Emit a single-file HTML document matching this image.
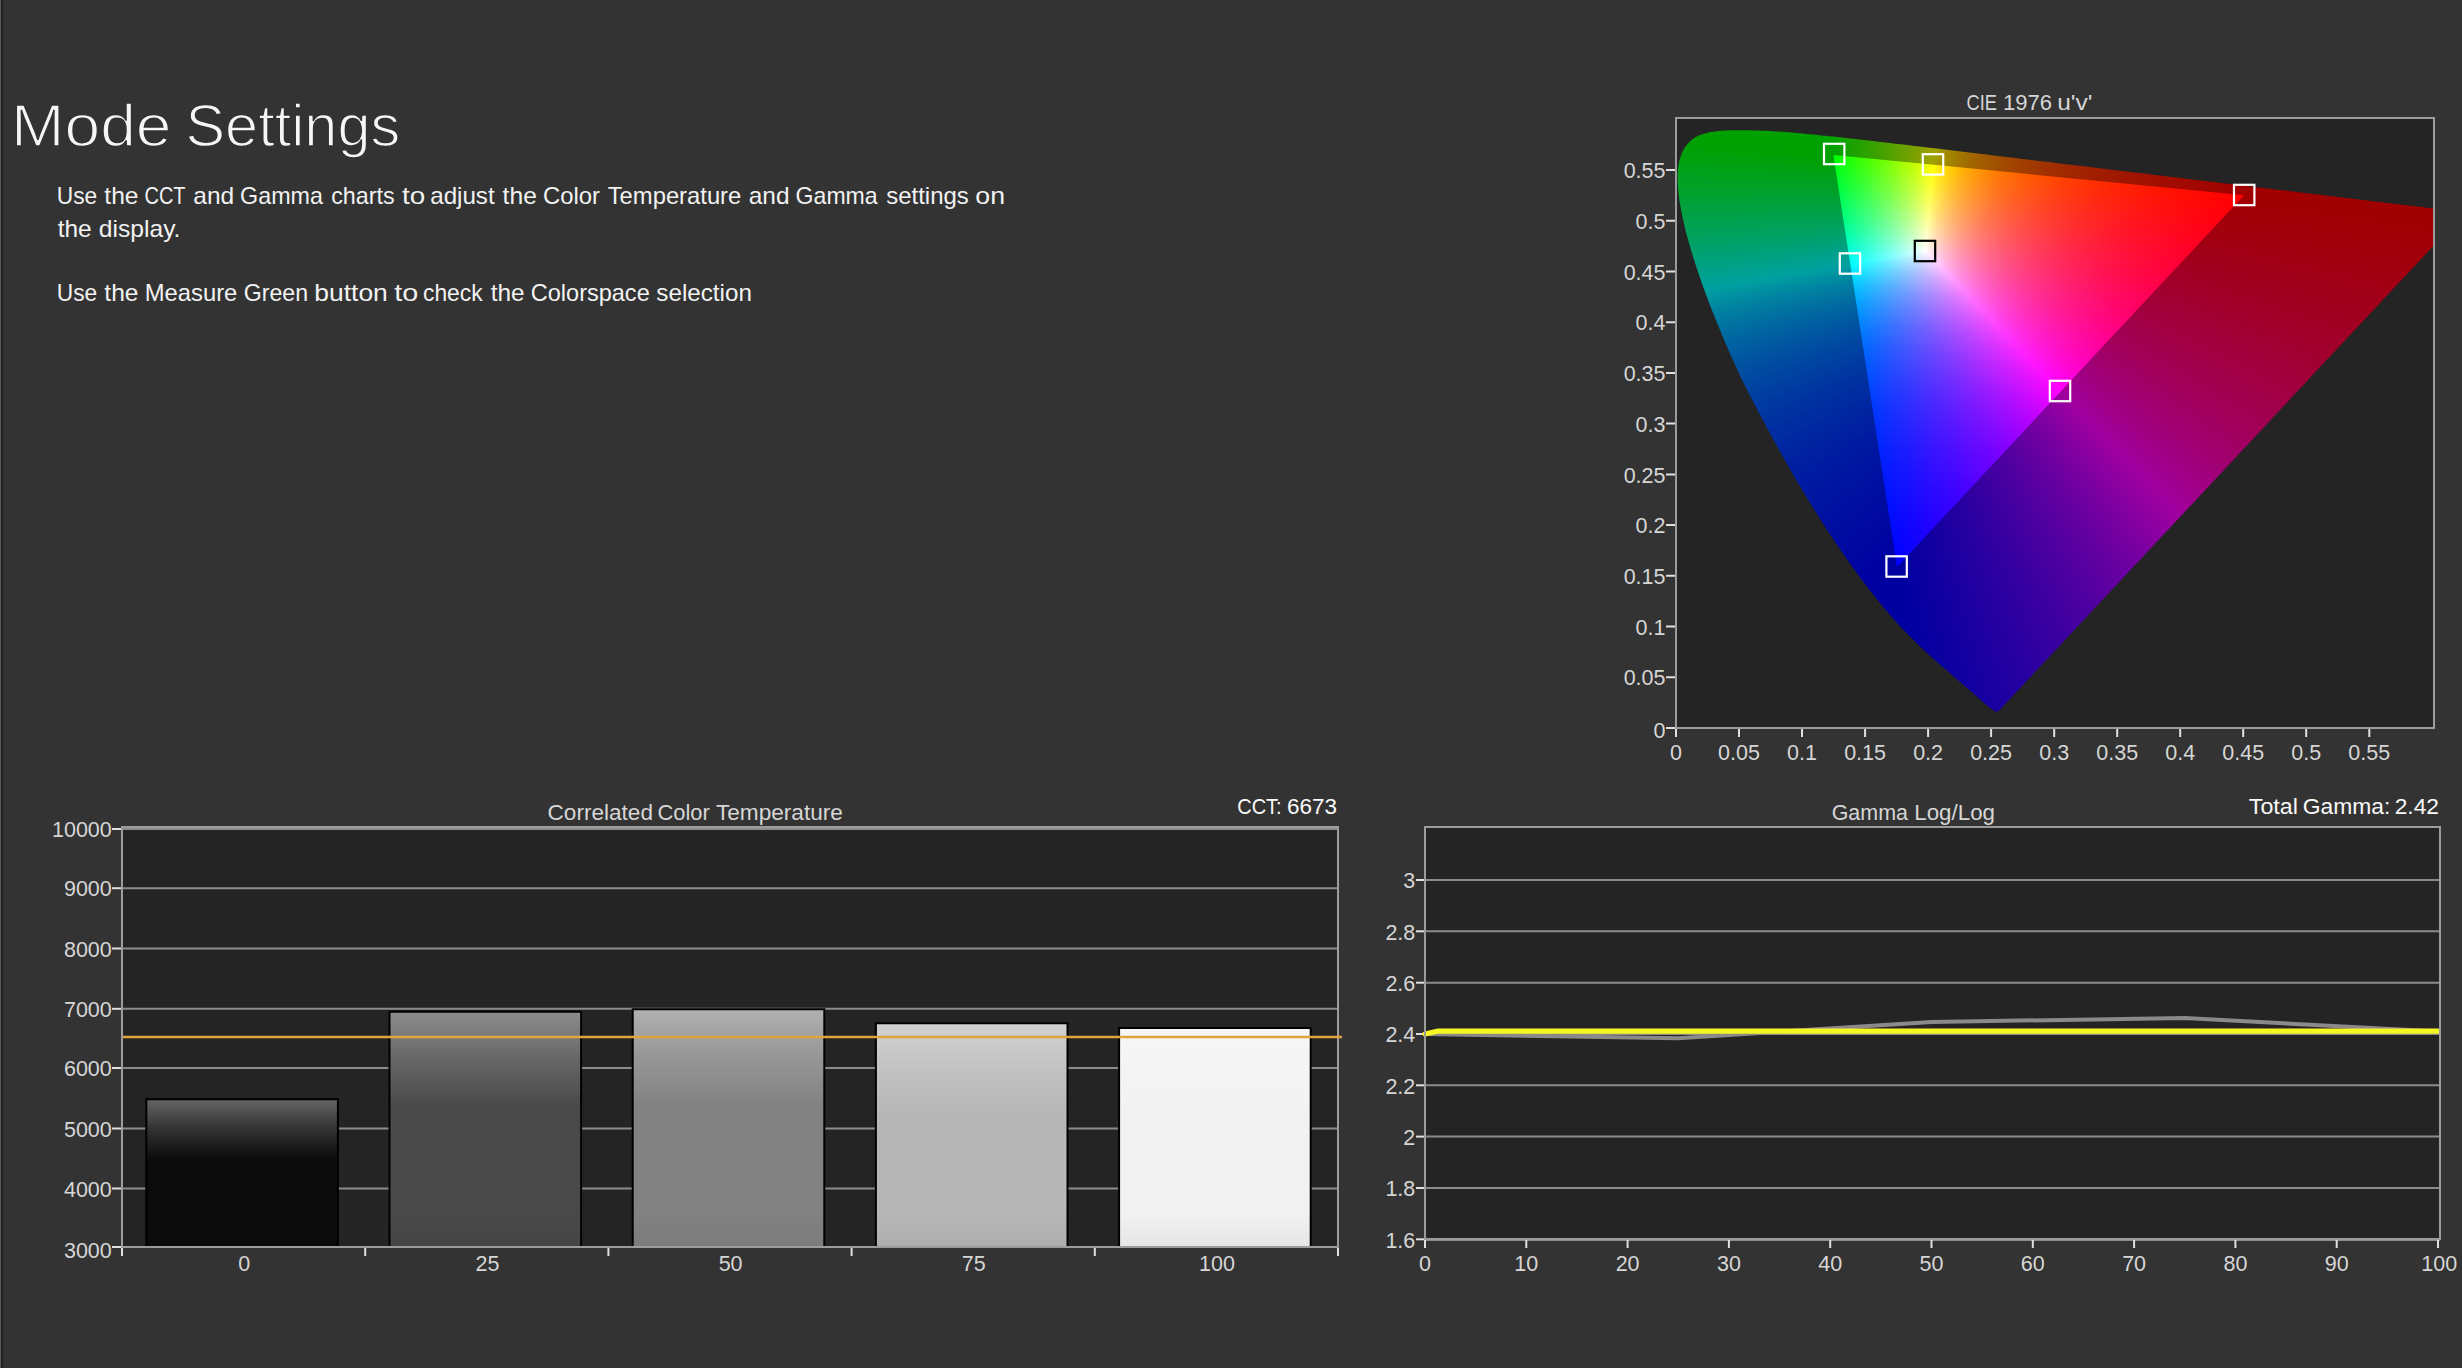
<!DOCTYPE html>
<html><head><meta charset="utf-8"><title>Mode Settings</title>
<style>
html,body{margin:0;padding:0}
body{width:2462px;height:1368px;background:#333;overflow:hidden;position:relative;font-family:"Liberation Sans", sans-serif}
.e1{position:absolute;left:0;top:0;width:1px;height:1368px;background:#5c5c5c}
.e2{position:absolute;left:1px;top:0;width:3px;height:1368px;background:linear-gradient(90deg,#1d1d1d 0 1px,#262626 1px 2px,#303030 2px 3px)}
.cie{position:absolute;left:1677px;top:119px;width:756px;height:608px;overflow:hidden;background:#242424}
.cie b{position:absolute;left:0;top:0;width:772px;height:608px;display:block;filter:blur(.7px)}
.cie i{position:absolute;display:block;height:2px}
svg{position:absolute;left:0;top:0}
text{font-family:"Liberation Sans", sans-serif}
</style></head><body>
<div class="e1"></div><div class="e2"></div>
<div class="cie"><b>
<i style="top:10px;left:38px;width:61px;background:linear-gradient(90deg,#00ff00 0px,#00ff00 61px)"></i>
<i style="top:12px;left:24px;width:101px;background:linear-gradient(90deg,#00ff00 0px,#00ff00 101px)"></i>
<i style="top:14px;left:19px;width:128px;background:linear-gradient(90deg,#00ff00 0px,#00ff00 128px)"></i>
<i style="top:16px;left:14px;width:149px;background:linear-gradient(90deg,#00ff00 0px,#01ff00 140px,#12ff00 149px)"></i>
<i style="top:18px;left:10px;width:175px;background:linear-gradient(90deg,#00ff00 0px,#00ff00 144px,#3fff00 175px)"></i>
<i style="top:20px;left:8px;width:190px;background:linear-gradient(90deg,#00ff00 0px,#00ff00 146px,#3dff00 176px,#5cff00 190px)"></i>
<i style="top:22px;left:5px;width:213px;background:linear-gradient(90deg,#00ff03 0px,#00ff00 38px,#01ff00 150px,#43ff00 182px,#85ff00 210px,#8dff00 213px)"></i>
<i style="top:24px;left:3px;width:230px;background:linear-gradient(90deg,#00ff05 0px,#00ff00 54px,#00ff00 152px,#43ff00 184px,#85ff00 212px,#b5ff00 230px)"></i>
<i style="top:26px;left:2px;width:247px;background:linear-gradient(90deg,#00ff08 0px,#00ff00 74px,#00ff00 152px,#02ff00 154px,#40ff00 184px,#83ff00 212px,#c9ff00 238px,#e4ff00 247px)"></i>
<i style="top:28px;left:1px;width:266px;background:linear-gradient(90deg,#00ff0b 0px,#00ff00 94px,#00ff00 154px,#35ff00 180px,#76ff00 208px,#bbff00 234px,#feff00 256px,#fff400 260px,#ffe300 266px)"></i>
<i style="top:30px;left:0px;width:284px;background:linear-gradient(90deg,#00ff0d 0px,#00ff00 116px,#01ff00 156px,#3fff00 186px,#82ff00 214px,#c4ff00 238px,#fbff00 256px,#fffd00 258px,#ffda00 270px,#ffbb00 284px)"></i>
<i style="top:32px;left:0px;width:297px;background:linear-gradient(90deg,#00ff10 0px,#00ff00 136px,#00ff00 156px,#3fff00 186px,#82ff00 214px,#c4ff00 238px,#fbff00 256px,#ffff00 257px,#ffd700 271px,#ffb400 287px,#ffa200 297px)"></i>
<i style="top:34px;left:0px;width:316px;background:linear-gradient(90deg,#00ff13 0px,#00ff01 142px,#00ff00 156px,#36ff00 182px,#78ff00 210px,#bfff00 236px,#fcff00 256px,#ffff00 257px,#ffdc00 269px,#ffbb00 283px,#ff9b00 301px,#ff8500 316px)"></i>
<i style="top:36px;left:0px;width:329px;background:linear-gradient(90deg,#00ff15 0px,#00ff04 144px,#00ff02 156px,#24ff00 174px,#64ff00 202px,#a8ff00 228px,#f0ff00 252px,#fdff00 256px,#fffe00 257px,#ffdb00 269px,#ffbb00 283px,#ff9a00 301px,#ff7c00 323px,#ff7500 329px)"></i>
<i style="top:38px;left:0px;width:350px;background:linear-gradient(90deg,#00ff18 0px,#00ff07 146px,#00ff06 156px,#02ff05 158px,#42ff00 188px,#82ff00 214px,#c5ff00 238px,#fdff00 256px,#fffa00 258px,#ffd800 270px,#ffb400 286px,#ff9500 304px,#ff7600 328px,#ff6000 350px)"></i>
<i style="top:40px;left:0px;width:364px;background:linear-gradient(90deg,#00ff1b 0px,#00ff0a 148px,#00ff09 156px,#02ff09 158px,#42ff04 188px,#82ff00 214px,#c5ff00 238px,#feff00 256px,#ffdd00 268px,#ffbc00 282px,#ff9b00 300px,#ff7c00 322px,#ff5f00 350px,#ff5400 364px)"></i>
<i style="top:42px;left:0px;width:379px;background:linear-gradient(90deg,#00ff1d 0px,#00ff0d 152px,#01ff0c 158px,#42ff08 188px,#82ff03 214px,#c5ff00 238px,#feff00 256px,#ffd700 270px,#ffb300 286px,#ff9400 304px,#ff7500 328px,#ff5800 358px,#ff4900 379px)"></i>
<i style="top:44px;left:0px;width:401px;background:linear-gradient(90deg,#00ff20 0px,#00ff11 154px,#00ff10 158px,#41ff0c 188px,#82ff07 214px,#c6ff02 238px,#ffff00 256px,#ffdb00 268px,#ffba00 282px,#ff9900 300px,#ff7b00 322px,#ff5e00 350px,#ff4400 386px,#ff3b00 401px)"></i>
<i style="top:46px;left:0px;width:416px;background:linear-gradient(90deg,#00ff23 0px,#00ff14 158px,#3cff10 186px,#7cff0c 212px,#c0ff07 236px,#ffff03 256px,#ffdb00 268px,#ffba00 282px,#ff9900 300px,#ff7a00 322px,#ff5e00 350px,#ff4300 386px,#ff3300 416px)"></i>
<i style="top:48px;left:0px;width:431px;background:linear-gradient(90deg,#00ff26 0px,#00ff17 158px,#2eff14 180px,#72ff10 208px,#b4ff0c 232px,#fffe08 256px,#ffda04 268px,#ffb901 282px,#ff9800 300px,#ff7a00 322px,#ff5d00 350px,#ff4300 386px,#ff2c00 431px)"></i>
<i style="top:50px;left:0px;width:446px;background:linear-gradient(90deg,#00ff28 0px,#00ff1b 158px,#07ff1b 162px,#45ff17 190px,#87ff13 216px,#cdff0f 240px,#faff0d 254px,#fffd0c 256px,#ffd909 268px,#ffb805 282px,#ff9702 300px,#ff7900 322px,#ff5d00 350px,#ff4200 386px,#ff2a00 434px,#ff2500 446px)"></i>
<i style="top:52px;left:0px;width:462px;background:linear-gradient(90deg,#00ff2b 0px,#00ff1f 158px,#02ff1f 160px,#40ff1b 188px,#82ff18 214px,#c7ff14 238px,#fbff12 254px,#fffd11 256px,#ffd90d 268px,#ffb809 282px,#ff9705 300px,#ff7901 322px,#ff5c00 350px,#ff4200 386px,#ff2900 434px,#ff1f00 462px)"></i>
<i style="top:54px;left:0px;width:484px;background:linear-gradient(90deg,#00ff2e 0px,#00ff23 158px,#01ff22 160px,#3fff1f 188px,#81ff1c 214px,#c7ff19 238px,#fbff16 254px,#ffff16 255px,#ffd511 269px,#ffb50c 283px,#ff9508 301px,#ff7704 323px,#ff5b00 351px,#ff4100 387px,#ff2900 435px,#ff1700 484px)"></i>
<i style="top:56px;left:0px;width:499px;background:linear-gradient(90deg,#00ff31 0px,#01ff26 160px,#3fff24 188px,#81ff21 214px,#c7ff1e 238px,#fcff1b 254px,#ffff1b 255px,#ffda16 267px,#ffb811 281px,#ff970c 299px,#ff7807 321px,#ff5c03 349px,#ff4100 385px,#ff2900 433px,#ff1300 497px,#ff1300 499px)"></i>
<i style="top:58px;left:0px;width:514px;background:linear-gradient(90deg,#00ff34 0px,#00ff2a 160px,#3fff28 188px,#81ff25 214px,#c8ff22 238px,#fcff20 254px,#fffe20 255px,#ffd91a 267px,#ffb814 281px,#ff960f 299px,#ff780a 321px,#ff5b05 349px,#ff4101 385px,#ff2900 433px,#ff1300 497px,#ff0e00 514px)"></i>
<i style="top:60px;left:0px;width:529px;background:linear-gradient(90deg,#00ff37 0px,#00ff2e 160px,#35ff2c 184px,#76ff2a 210px,#bbff27 234px,#fdff25 254px,#fffa24 256px,#ffd61e 268px,#ffb518 282px,#ff9412 300px,#ff760c 322px,#ff5a07 350px,#ff4003 386px,#ff2800 434px,#ff1200 500px,#ff0a00 529px)"></i>
<i style="top:62px;left:0px;width:551px;background:linear-gradient(90deg,#00ff39 0px,#00ff32 160px,#10ff31 168px,#52ff2f 196px,#92ff2d 220px,#d5ff2b 242px,#feff2a 254px,#fff328 258px,#ffd021 270px,#ffb01b 284px,#ff9014 302px,#ff730f 324px,#ff5709 352px,#ff3e04 388px,#ff2600 436px,#ff1100 502px,#ff0500 551px)"></i>
<i style="top:64px;left:0px;width:564px;background:linear-gradient(90deg,#00ff3c 0px,#00ff36 160px,#02ff36 162px,#42ff34 190px,#87ff32 216px,#c9ff31 238px,#feff2f 254px,#ffd526 268px,#ffb41f 282px,#ff9318 300px,#ff7512 322px,#ff590c 350px,#ff3f07 386px,#ff2702 434px,#ff1100 500px,#ff0300 564px)"></i>
<i style="top:66px;left:0px;width:584px;background:linear-gradient(90deg,#00ff3f 0px,#00ff3a 160px,#02ff3a 162px,#42ff38 190px,#87ff37 216px,#c9ff36 238px,#ffff34 254px,#ffda2c 266px,#ffb724 280px,#ff951c 298px,#ff7715 320px,#ff5a0f 348px,#ff3f09 384px,#ff2703 432px,#ff1200 494px,#ff0000 576px,#ff0000 584px)"></i>
<i style="top:68px;left:0px;width:597px;background:linear-gradient(90deg,#00ff42 0px,#01ff3e 162px,#42ff3d 190px,#81ff3c 214px,#c3ff3b 236px,#ffff3a 254px,#ffd930 266px,#ffb728 280px,#ff9520 298px,#ff7618 320px,#ff5911 348px,#ff3f0b 384px,#ff2705 432px,#ff1100 496px,#ff0000 576px,#ff0000 597px)"></i>
<i style="top:70px;left:0px;width:615px;background:linear-gradient(90deg,#00ff45 0px,#00ff42 162px,#41ff41 190px,#81ff40 214px,#c3ff40 236px,#fffe3f 254px,#ffd835 266px,#ffb62c 280px,#ff9423 298px,#ff751b 320px,#ff5914 348px,#ff3e0d 384px,#ff2607 432px,#ff1001 498px,#ff0000 574px,#ff0000 615px)"></i>
<i style="top:72px;left:0px;width:632px;background:linear-gradient(90deg,#00ff48 0px,#00ff46 162px,#3cff46 188px,#7bff45 212px,#bdff45 234px,#faff44 252px,#fffd44 254px,#ffd839 266px,#ffb530 280px,#ff9327 298px,#ff751e 320px,#ff5816 348px,#ff3e0f 384px,#ff2608 432px,#ff1002 498px,#ff0000 570px,#ff0000 632px)"></i>
<i style="top:74px;left:0px;width:647px;background:linear-gradient(90deg,#00ff4b 0px,#00ff4a 162px,#2dff4a 182px,#70ff4a 208px,#b0ff4a 230px,#f3ff4a 250px,#faff4a 252px,#fffd49 254px,#ffd73e 266px,#ffb534 280px,#ff932a 298px,#ff7421 320px,#ff5719 348px,#ff3d11 384px,#ff250a 432px,#ff0f04 498px,#ff0000 572px,#ff0000 647px)"></i>
<i style="top:76px;left:0px;width:666px;background:linear-gradient(90deg,#00ff4e 0px,#00ff4f 162px,#03ff4f 164px,#45ff4f 192px,#86ff4f 216px,#caff4f 238px,#fbff4f 252px,#feff4f 253px,#ffd943 265px,#ffb639 279px,#ff972f 295px,#ff7a26 315px,#ff5d1d 341px,#ff4215 375px,#ff2a0e 419px,#ff1407 479px,#ff0101 563px,#ff0000 666px)"></i>
<i style="top:78px;left:0px;width:682px;background:linear-gradient(90deg,#00ff51 0px,#00ff53 162px,#02ff53 164px,#40ff53 190px,#80ff54 214px,#c4ff54 236px,#fbff55 252px,#ffff55 253px,#ffde4a 263px,#ffba3e 277px,#ff9a34 293px,#ff7c2a 313px,#ff5e20 339px,#ff4518 371px,#ff2c10 415px,#ff1609 473px,#ff0202 555px,#ff0001 583px,#ff0000 682px)"></i>
<i style="top:80px;left:0px;width:700px;background:linear-gradient(90deg,#00ff54 0px,#00ff57 162px,#01ff57 164px,#3fff58 190px,#80ff59 214px,#c4ff59 236px,#fcff5a 252px,#fffe5a 253px,#ffdd4f 263px,#ffb942 277px,#ff9937 293px,#ff7b2d 313px,#ff5e23 339px,#ff431a 373px,#ff2a11 417px,#ff140a 477px,#ff0003 561px,#ff0000 651px,#ff0000 700px)"></i>
<i style="top:82px;left:0px;width:716px;background:linear-gradient(90deg,#00ff57 0px,#01ff5c 164px,#3fff5d 190px,#80ff5e 214px,#c5ff5f 236px,#fdff60 252px,#fffa5e 254px,#ffd450 266px,#ffb244 280px,#ff9339 296px,#ff762f 316px,#ff5a25 342px,#ff401b 376px,#ff2813 420px,#ff130b 480px,#ff0004 562px,#ff0000 666px,#ff0000 716px)"></i>
<i style="top:84px;left:0px;width:733px;background:linear-gradient(90deg,#00ff5a 0px,#00ff60 164px,#3eff61 190px,#80ff63 214px,#c5ff64 236px,#fdff65 252px,#fff963 254px,#ffd355 266px,#ffb148 280px,#ff933d 296px,#ff7632 316px,#ff5a27 342px,#ff401d 376px,#ff2714 422px,#ff110c 484px,#ff0005 560px,#ff0000 682px,#ff0000 733px)"></i>
<i style="top:86px;left:0px;width:749px;background:linear-gradient(90deg,#00ff5d 0px,#00ff64 164px,#34ff66 186px,#74ff67 210px,#b8ff69 232px,#feff6b 252px,#ffd35a 266px,#ffb04c 280px,#ff9240 296px,#ff7535 316px,#ff592a 342px,#ff3f20 376px,#ff2716 422px,#ff110d 484px,#ff0007 560px,#ff0000 702px,#ff0000 749px)"></i>
<i style="top:88px;left:0px;width:762px;background:linear-gradient(90deg,#00ff61 0px,#00ff69 164px,#08ff69 168px,#48ff6b 194px,#8cff6d 218px,#ccff6f 238px,#ffff71 252px,#ffd861 264px,#ffb452 278px,#ff9545 294px,#ff7739 314px,#ff5a2d 340px,#ff4022 374px,#ff2818 418px,#ff1210 478px,#ff0008 556px,#ff0000 716px,#ff0000 762px)"></i>
<i style="top:90px;left:0px;width:762px;background:linear-gradient(90deg,#00ff64 0px,#00ff6d 164px,#02ff6e 166px,#42ff70 192px,#86ff72 216px,#cdff75 238px,#ffff77 252px,#ffdd68 262px,#ffbd5a 274px,#ff9b4c 290px,#ff7b3e 310px,#ff5f32 334px,#ff4527 366px,#ff2c1c 408px,#ff1613 464px,#ff020a 544px,#ff0008 572px,#ff0000 738px,#ff0000 762px)"></i>
<i style="top:92px;left:0px;width:762px;background:linear-gradient(90deg,#00ff67 0px,#00ff72 164px,#02ff72 166px,#42ff75 192px,#86ff78 216px,#c6ff7a 236px,#fffe7c 252px,#ffdc6d 262px,#ffbc5f 274px,#ff9a50 290px,#ff7b42 310px,#ff5f35 334px,#ff4429 366px,#ff2c1e 408px,#ff1614 464px,#ff010b 544px,#ff0008 586px,#ff0000 760px,#ff0000 762px)"></i>
<i style="top:94px;left:0px;width:762px;background:linear-gradient(90deg,#00ff6a 0px,#01ff77 166px,#41ff7a 192px,#86ff7d 216px,#c6ff80 236px,#f9ff83 250px,#fffd82 252px,#ffdb72 262px,#ffbb63 274px,#ff9a54 290px,#ff7a45 310px,#ff5e38 334px,#ff432b 366px,#ff2b20 408px,#ff1516 464px,#ff010d 544px,#ff0001 736px,#ff0000 762px)"></i>
<i style="top:96px;left:0px;width:762px;background:linear-gradient(90deg,#00ff6d 0px,#00ff7b 162px,#00ff7b 166px,#41ff7f 192px,#86ff82 216px,#c7ff86 236px,#faff89 250px,#fffd88 252px,#ffdb77 262px,#ffba68 274px,#ff9957 290px,#ff7948 310px,#ff5e3b 334px,#ff432e 366px,#ff2a22 408px,#ff1517 464px,#ff010e 544px,#ff0002 730px,#ff0001 762px)"></i>
<i style="top:98px;left:0px;width:762px;background:linear-gradient(90deg,#00ff71 0px,#00ff7f 156px,#00ff80 166px,#3bff84 190px,#7fff88 214px,#c0ff8b 234px,#faff8f 250px,#feff8f 251px,#ffd77b 263px,#ffb76b 275px,#ff965a 291px,#ff774b 311px,#ff5c3d 335px,#ff4230 367px,#ff2a24 409px,#ff1319 467px,#ff000f 545px,#ff0003 729px,#ff0001 762px)"></i>
<i style="top:100px;left:0px;width:762px;background:linear-gradient(90deg,#00ff74 0px,#00ff83 150px,#00ff85 166px,#26ff87 182px,#67ff8c 206px,#acff90 228px,#f3ff95 248px,#fbff95 250px,#ffff95 251px,#ffdc83 261px,#ffbb72 273px,#ff9960 289px,#ff7c51 307px,#ff5f42 331px,#ff4534 361px,#ff2d28 401px,#ff171c 455px,#ff0312 531px,#ff000f 555px,#ff0003 743px,#ff0002 762px)"></i>
<i style="top:102px;left:0px;width:762px;background:linear-gradient(90deg,#00ff77 0px,#00ff86 144px,#00ff8a 166px,#03ff8a 168px,#45ff8f 194px,#85ff93 216px,#c8ff98 236px,#fcff9b 250px,#fffe9b 251px,#ffdc88 261px,#ffba76 273px,#ff9864 289px,#ff7b54 307px,#ff5f45 331px,#ff4537 361px,#ff2c2a 401px,#ff161e 455px,#ff0213 531px,#ff0010 555px,#ff0004 739px,#ff0003 762px)"></i>
<i style="top:104px;left:0px;width:762px;background:linear-gradient(90deg,#00ff7b 0px,#00ff8a 140px,#00ff8f 166px,#02ff8f 168px,#3fff94 192px,#7fff98 214px,#c1ff9d 234px,#fcffa2 250px,#fffea1 251px,#ffdb8e 261px,#ffba7b 273px,#ff9868 289px,#ff7b58 307px,#ff5e48 331px,#ff4439 361px,#ff2c2c 401px,#ff161f 455px,#ff0214 531px,#ff0011 557px,#ff0005 739px,#ff0004 762px)"></i>
<i style="top:106px;left:1px;width:761px;background:linear-gradient(90deg,#00ff7e 0px,#00ff8e 134px,#00ff94 166px,#2cff97 184px,#70ff9d 208px,#b0ffa2 228px,#f1ffa7 246px,#f9ffa8 248px,#fffda7 250px,#ffda93 260px,#ffb980 272px,#ff976c 288px,#ff7a5b 306px,#ff5d4b 330px,#ff433c 360px,#ff2b2e 400px,#ff1521 454px,#ff0215 530px,#ff0011 566px,#ff0005 752px,#ff0004 761px)"></i>
<i style="top:108px;left:2px;width:760px;background:linear-gradient(90deg,#00ff81 0px,#00ff92 130px,#01ff99 166px,#3eff9e 190px,#7fffa4 212px,#c2ffaa 232px,#feffaf 248px,#ffd696 260px,#ffb683 272px,#ff946f 288px,#ff755c 308px,#ff5a4c 332px,#ff3f3c 364px,#ff272e 406px,#ff1120 464px,#ff0016 536px,#ff0008 696px,#ff0005 760px)"></i>
<i style="top:110px;left:2px;width:760px;background:linear-gradient(90deg,#00ff85 0px,#00ff96 126px,#00ff9e 166px,#3effa4 190px,#7fffaa 212px,#c2ffb0 232px,#feffb5 248px,#ffd69c 260px,#ffb588 272px,#ff9473 288px,#ff7460 308px,#ff594f 332px,#ff3f3e 364px,#ff272f 406px,#ff1122 464px,#ff0017 534px,#ff000a 690px,#ff0006 760px)"></i>
<i style="top:112px;left:3px;width:759px;background:linear-gradient(90deg,#00ff88 0px,#00ff9a 122px,#00ffa3 164px,#02ffa3 166px,#40ffa9 190px,#82ffb0 212px,#c6ffb7 232px,#fbffbc 246px,#ffffbc 247px,#ffdba5 257px,#ffb98f 269px,#ff9a7c 283px,#ff7c68 301px,#ff6157 323px,#ff4545 353px,#ff2d36 391px,#ff1728 443px,#ff031b 517px,#ff0018 539px,#ff000a 695px,#ff0007 759px)"></i>
<i style="top:114px;left:3px;width:759px;background:linear-gradient(90deg,#00ff8c 0px,#00ff9e 120px,#01ffa9 166px,#40ffaf 190px,#82ffb6 212px,#c6ffbd 232px,#fcffc3 246px,#fffec2 247px,#ffdaab 257px,#ffb894 269px,#ff9a80 283px,#ff7b6c 301px,#ff605a 323px,#ff4548 353px,#ff2d38 391px,#ff1729 443px,#ff021c 517px,#ff0019 539px,#ff000b 693px,#ff0007 759px)"></i>
<i style="top:116px;left:4px;width:758px;background:linear-gradient(90deg,#00ff8f 0px,#00ffa2 116px,#00ffae 164px,#03ffae 166px,#42ffb5 190px,#85ffbc 212px,#caffc4 232px,#f9ffc9 244px,#fffdc9 246px,#ffd9b0 256px,#ffb899 268px,#ff9984 282px,#ff7b70 300px,#ff5f5d 322px,#ff444a 352px,#ff2c3a 390px,#ff162b 442px,#ff021d 516px,#ff001a 540px,#ff000c 692px,#ff0008 758px)"></i>
<i style="top:118px;left:4px;width:758px;background:linear-gradient(90deg,#00ff93 0px,#00ffa6 114px,#00ffb3 164px,#02ffb3 166px,#42ffbb 190px,#85ffc2 212px,#cbffcb 232px,#f9ffd0 244px,#fffdcf 246px,#ffd9b6 256px,#ffb79e 268px,#ff9888 282px,#ff7a73 300px,#ff5e60 322px,#ff434d 352px,#ff2c3c 390px,#ff162d 442px,#ff021f 516px,#ff001a 552px,#ff000c 710px,#ff0009 758px)"></i>
<i style="top:120px;left:5px;width:757px;background:linear-gradient(90deg,#00ff97 0px,#00ffaa 110px,#00ffb8 164px,#09ffba 168px,#4affc2 192px,#8fffca 214px,#cfffd2 232px,#feffd8 244px,#ffd5b9 256px,#ffb4a1 268px,#ff958b 282px,#ff7876 300px,#ff5b61 324px,#ff414e 354px,#ff293c 394px,#ff132d 448px,#ff001f 520px,#ff0010 656px,#ff000a 757px)"></i>
<i style="top:122px;left:5px;width:757px;background:linear-gradient(90deg,#00ff9a 0px,#00ffae 108px,#00ffbe 164px,#03ffbe 166px,#44ffc7 190px,#88ffcf 212px,#cfffd9 232px,#ffffdf 244px,#ffdac3 254px,#ffb8aa 266px,#ff9892 280px,#ff7a7b 298px,#ff5e67 320px,#ff4353 350px,#ff2b41 388px,#ff1530 440px,#ff0121 514px,#ff0012 644px,#ff000b 757px)"></i>
<i style="top:124px;left:6px;width:755px;background:linear-gradient(90deg,#00ff9e 0px,#00ffb2 104px,#00ffc4 164px,#3affcc 186px,#7effd5 208px,#c4ffde 228px,#fbffe5 242px,#ffffe6 243px,#ffdac9 253px,#ffb7af 265px,#ff9897 279px,#ff797f 297px,#ff5d6a 319px,#ff4255 349px,#ff2a43 387px,#ff1532 439px,#ff0123 513px,#ff0013 641px,#ff000b 755px)"></i>
<i style="top:126px;left:6px;width:754px;background:linear-gradient(90deg,#00ffa1 0px,#00ffb6 102px,#00ffc9 164px,#19ffcd 174px,#58ffd6 196px,#99ffdf 216px,#dcffe8 234px,#fcffed 242px,#fffeec 243px,#ffd9cf 253px,#ffb6b4 265px,#ff979b 279px,#ff7883 297px,#ff5d6d 319px,#ff4258 349px,#ff2a45 387px,#ff1434 439px,#ff0024 513px,#ff0015 639px,#ff000c 754px)"></i>
<i style="top:128px;left:7px;width:751px;background:linear-gradient(90deg,#00ffa5 0px,#00ffbb 100px,#01ffcf 164px,#42ffd9 188px,#81ffe2 208px,#c1ffeb 226px,#f9fff4 240px,#fffdf3 242px,#ffd8d5 252px,#ffb5b9 264px,#ff969f 278px,#ff7887 296px,#ff5c70 318px,#ff415a 348px,#ff2947 386px,#ff1435 438px,#ff0026 510px,#ff0016 632px,#ff000d 751px)"></i>
<i style="top:130px;left:7px;width:749px;background:linear-gradient(90deg,#00ffa9 0px,#00ffbf 98px,#00ffd5 164px,#3cffde 186px,#7affe8 206px,#bafff1 224px,#f9fffb 240px,#fefffc 241px,#fff0f0 245px,#ffced3 255px,#ffadb8 267px,#ff8c9c 283px,#ff6d82 303px,#ff526c 327px,#ff3956 359px,#ff2243 401px,#ff0d32 459px,#ff0026 513px,#ff0017 635px,#ff000e 749px)"></i>
<i style="top:132px;left:8px;width:746px;background:linear-gradient(90deg,#00ffad 0px,#00ffc3 96px,#00ffda 162px,#02ffdb 164px,#3effe5 186px,#7dffef 206px,#befff9 224px,#e5ffff 234px,#fafbff 240px,#fff7fd 242px,#ffd3de 252px,#ffb1c1 264px,#ff93a7 278px,#ff758d 296px,#ff5a76 318px,#ff3f5f 348px,#ff274a 388px,#ff1137 442px,#ff0029 508px,#ff0019 626px,#ff000f 746px)"></i>
<i style="top:134px;left:8px;width:744px;background:linear-gradient(90deg,#00ffb1 0px,#00ffc7 94px,#01ffe1 164px,#3effeb 186px,#7dfff5 206px,#bdfeff 224px,#faf2ff 242px,#ffeffd 244px,#ffccde 254px,#ffabc2 266px,#ff8ea8 280px,#ff718e 298px,#ff5575 322px,#ff3c5f 352px,#ff244a 392px,#ff0f37 448px,#ff002a 508px,#ff001a 624px,#ff0010 744px)"></i>
<i style="top:136px;left:9px;width:741px;background:linear-gradient(90deg,#00ffb5 0px,#00ffcc 92px,#00ffe5 160px,#00ffe6 162px,#00ffe7 163px,#3dfff1 185px,#7dfffc 205px,#98fdff 213px,#fbeaff 243px,#fee9ff 244px,#ffc2dc 256px,#ffa4c0 268px,#ff84a4 284px,#ff678a 304px,#ff4c71 330px,#ff325a 364px,#ff1b45 410px,#ff0732 474px,#ff002b 506px,#ff001b 620px,#ff0011 741px)"></i>
<i style="top:138px;left:10px;width:738px;background:linear-gradient(90deg,#00ffb9 0px,#00ffd0 90px,#00ffeb 158px,#00ffec 162px,#2bfff4 178px,#69feff 198px,#e1e7ff 236px,#fbe2ff 244px,#fee1ff 245px,#ffbcdc 257px,#ff9abd 271px,#ff7da2 287px,#ff6189 307px,#ff4770 333px,#ff2f5a 367px,#ff1945 413px,#ff0533 477px,#ff002d 505px,#ff001c 619px,#ff0012 738px)"></i>
<i style="top:140px;left:10px;width:737px;background:linear-gradient(90deg,#00ffbd 0px,#00ffd5 88px,#00ffef 154px,#00fff2 162px,#04fff3 164px,#42ffff 186px,#bbe7ff 226px,#fbdaff 246px,#ffdaff 247px,#ffb6dd 259px,#ff95be 273px,#ff76a0 291px,#ff5a85 313px,#ff406d 341px,#ff2856 379px,#ff1241 431px,#ff0030 497px,#ff001f 605px,#ff0013 737px)"></i>
<i style="top:142px;left:11px;width:734px;background:linear-gradient(90deg,#00ffc1 0px,#00ffd9 86px,#00fff4 152px,#00fff9 162px,#21feff 174px,#95e7ff 214px,#ffd2ff 248px,#ffb0dd 260px,#ff90bf 274px,#ff72a1 292px,#ff5787 314px,#ff3d6d 344px,#ff2455 384px,#ff0f40 438px,#ff0031 496px,#ff0020 602px,#ff0013 734px)"></i>
<i style="top:144px;left:12px;width:731px;background:linear-gradient(90deg,#00ffc5 0px,#00ffde 84px,#00fff8 148px,#00ffff 160px,#02feff 162px,#77e7ff 204px,#f0ceff 244px,#fcccff 248px,#ffcbff 249px,#ffaadd 261px,#ff8cbf 275px,#ff6fa2 293px,#ff5286 317px,#ff396d 347px,#ff2255 387px,#ff0d40 443px,#ff0033 495px,#ff0021 599px,#ff0014 731px)"></i>
<i style="top:146px;left:12px;width:729px;background:linear-gradient(90deg,#00ffc9 0px,#00ffe2 82px,#00fffd 146px,#00faff 158px,#01f8ff 162px,#74e1ff 204px,#eac9ff 244px,#fcc5ff 250px,#ffc4fe 251px,#ffa4de 263px,#ff87c0 277px,#ff6ba3 295px,#ff5087 319px,#ff376e 349px,#ff2057 389px,#ff0b41 445px,#ff0034 493px,#ff0023 595px,#ff0015 729px)"></i>
<i style="top:148px;left:13px;width:726px;background:linear-gradient(90deg,#00ffcd 0px,#00ffe7 82px,#00feff 138px,#00f3ff 160px,#03f2ff 162px,#79d9ff 206px,#eec1ff 246px,#ffbdfe 252px,#ff9fde 264px,#ff7fbd 280px,#ff639f 300px,#ff4984 324px,#ff316b 356px,#ff1b54 398px,#ff083f 456px,#ff0036 492px,#ff0024 592px,#ff0016 726px)"></i>
<i style="top:150px;left:14px;width:723px;background:linear-gradient(90deg,#00ffd1 0px,#00ffec 80px,#00feff 126px,#00edff 160px,#69d7ff 200px,#dfbeff 242px,#fdb8ff 252px,#ffb4fb 254px,#ff97dc 266px,#ff7abc 282px,#ff5e9f 302px,#ff4483 328px,#ff2c69 362px,#ff1752 406px,#ff043d 468px,#ff0038 490px,#ff0025 590px,#ff0017 723px)"></i>
<i style="top:152px;left:14px;width:721px;background:linear-gradient(90deg,#00ffd5 0px,#00fff0 78px,#00feff 114px,#00e7ff 160px,#22e0ff 174px,#97c7ff 218px,#fdb2ff 254px,#ffaefb 256px,#ff8ed8 270px,#ff73ba 286px,#ff599d 306px,#ff4082 332px,#ff2969 366px,#ff1451 412px,#ff013c 476px,#ff002c 554px,#ff001c 684px,#ff0018 721px)"></i>
<i style="top:154px;left:15px;width:719px;background:linear-gradient(90deg,#00ffda 0px,#00fff4 76px,#00feff 102px,#00e1ff 160px,#76c9ff 206px,#efafff 250px,#fbadff 254px,#ffaafe 256px,#ff8bda 270px,#ff70bc 286px,#ff579f 306px,#ff3f84 332px,#ff286a 366px,#ff1353 412px,#ff013e 474px,#ff002b 564px,#ff001b 700px,#ff0019 719px)"></i>
<i style="top:156px;left:15px;width:717px;background:linear-gradient(90deg,#00ffde 0px,#00fff9 76px,#00fdff 92px,#00dcff 160px,#6ec5ff 204px,#e4acff 248px,#fba7ff 256px,#ffa4fd 258px,#ff87db 272px,#ff6dbd 288px,#ff54a0 308px,#ff3c85 334px,#ff276c 368px,#ff1254 414px,#ff003f 476px,#ff002c 566px,#ff001c 700px,#ff001a 717px)"></i>
<i style="top:158px;left:16px;width:714px;background:linear-gradient(90deg,#00ffe2 0px,#00fffe 74px,#00d9ff 156px,#01d7ff 160px,#78bdff 208px,#eda4ff 252px,#fea1ff 258px,#ff80d9 274px,#ff65b9 292px,#ff4c9b 314px,#ff3580 342px,#ff2067 378px,#ff0d51 426px,#ff0040 478px,#ff002d 568px,#ff001c 702px,#ff001b 714px)"></i>
<i style="top:160px;left:17px;width:711px;background:linear-gradient(90deg,#00ffe7 0px,#00feff 66px,#00d3ff 158px,#03d2ff 160px,#78b8ff 208px,#f19eff 254px,#fc9cff 258px,#ff99fd 260px,#ff7edb 274px,#ff63bb 292px,#ff4a9d 314px,#ff3482 342px,#ff1f69 378px,#ff0c52 426px,#ff0042 474px,#ff002f 562px,#ff001e 692px,#ff001c 711px)"></i>
<i style="top:162px;left:18px;width:708px;background:linear-gradient(90deg,#00ffec 0px,#00feff 54px,#00ceff 158px,#72b5ff 206px,#e99bff 252px,#ff96ff 260px,#ff78da 276px,#ff5eba 294px,#ff479d 316px,#ff3182 344px,#ff1c68 382px,#ff0a51 432px,#ff0044 472px,#ff0031 558px,#ff001f 686px,#ff001d 708px)"></i>
<i style="top:164px;left:18px;width:706px;background:linear-gradient(90deg,#00fff0 0px,#00feff 42px,#00c9ff 158px,#5cb5ff 198px,#d59aff 246px,#ff91ff 262px,#ff77de 276px,#ff5dbe 294px,#ff46a0 316px,#ff3085 344px,#ff1d6c 380px,#ff0a54 428px,#ff0046 470px,#ff0032 554px,#ff0021 678px,#ff001e 706px)"></i>
<i style="top:166px;left:19px;width:703px;background:linear-gradient(90deg,#00fff5 0px,#00feff 30px,#00c8ff 150px,#01c4ff 158px,#75abff 208px,#ed90ff 256px,#fc8dff 262px,#ff8cff 263px,#ff73de 277px,#ff5abe 295px,#ff44a1 317px,#ff2f86 345px,#ff1b6d 381px,#ff0955 429px,#ff0048 467px,#ff0034 549px,#ff0023 669px,#ff001f 703px)"></i>
<i style="top:168px;left:20px;width:701px;background:linear-gradient(90deg,#00fff9 0px,#00feff 18px,#00c7ff 142px,#00c1ff 156px,#02c0ff 158px,#79a5ff 210px,#f08bff 258px,#ff87ff 264px,#ff6fdf 278px,#ff57bf 296px,#ff41a2 318px,#ff2d87 346px,#ff1a6e 382px,#ff0856 430px,#ff004a 464px,#ff0036 544px,#ff0024 662px,#ff0020 701px)"></i>
<i style="top:170px;left:21px;width:698px;background:linear-gradient(90deg,#00fffe 0px,#00d7ff 98px,#00bcff 156px,#62a6ff 200px,#da8bff 250px,#fd83ff 264px,#ff81fc 266px,#ff67d9 282px,#ff51bb 300px,#ff3b9d 324px,#ff2782 354px,#ff1468 394px,#ff0251 448px,#ff004b 466px,#ff0037 548px,#ff0025 666px,#ff0021 698px)"></i>
<i style="top:172px;left:22px;width:695px;background:linear-gradient(90deg,#00fbff 0px,#00c5ff 128px,#01b8ff 156px,#799dff 210px,#f182ff 260px,#ff7efe 266px,#ff65db 282px,#ff4fbd 300px,#ff399f 324px,#ff2584 354px,#ff136a 394px,#ff0253 446px,#ff004d 464px,#ff0038 544px,#ff0026 660px,#ff0022 695px)"></i>
<i style="top:174px;left:22px;width:693px;background:linear-gradient(90deg,#00f7ff 0px,#00c0ff 130px,#00b4ff 156px,#7699ff 210px,#ec7eff 260px,#ff79fe 268px,#ff61dc 284px,#ff4abb 304px,#ff359e 328px,#ff2383 358px,#ff116a 398px,#ff0052 452px,#ff003d 526px,#ff002b 632px,#ff0023 693px)"></i>
<i style="top:176px;left:23px;width:690px;background:linear-gradient(90deg,#00f2ff 0px,#00bcff 130px,#00b1ff 154px,#02b0ff 156px,#7695ff 210px,#ef79ff 262px,#fe76ff 268px,#ff6df2 274px,#ff57d3 290px,#ff43b5 310px,#ff2e98 336px,#ff1b7c 370px,#ff0a63 414px,#ff0053 454px,#ff003e 528px,#ff002b 634px,#ff0025 690px)"></i>
<i style="top:178px;left:24px;width:687px;background:linear-gradient(90deg,#00eeff 0px,#00b7ff 132px,#00adff 154px,#4f9aff 192px,#c77fff 246px,#fb73ff 268px,#ff71fe 270px,#ff5adc 286px,#ff45bc 306px,#ff319f 330px,#ff1e83 362px,#ff0d6a 404px,#ff0056 450px,#ff0041 522px,#ff002d 626px,#ff0026 687px)"></i>
<i style="top:180px;left:25px;width:685px;background:linear-gradient(90deg,#00e9ff 0px,#00b3ff 132px,#00a9ff 154px,#768eff 210px,#eb72ff 262px,#fe6eff 270px,#ff53d7 290px,#ff3fb9 310px,#ff2c9b 336px,#ff197f 370px,#ff0966 414px,#ff0058 448px,#ff0042 520px,#ff002f 622px,#ff0027 685px)"></i>
<i style="top:182px;left:25px;width:683px;background:linear-gradient(90deg,#00e5ff 0px,#00aeff 134px,#00a5ff 154px,#6f8bff 208px,#e770ff 262px,#fe6aff 272px,#ff53db 290px,#ff3fbc 310px,#ff2b9e 336px,#ff1a83 368px,#ff096a 410px,#ff005a 446px,#ff0044 516px,#ff0031 616px,#ff0028 683px)"></i>
<i style="top:184px;left:26px;width:680px;background:linear-gradient(90deg,#00e1ff 0px,#00aaff 136px,#01a1ff 154px,#7786ff 212px,#ee6aff 266px,#fc67ff 272px,#ff65fd 274px,#ff51dd 290px,#ff3dbe 310px,#ff2aa0 336px,#ff1985 368px,#ff096b 410px,#ff005c 444px,#ff0046 514px,#ff0032 612px,#ff0029 680px)"></i>
<i style="top:186px;left:27px;width:677px;background:linear-gradient(90deg,#00ddff 0px,#00a6ff 136px,#009fff 152px,#069dff 156px,#7b81ff 214px,#f665ff 270px,#ff63ff 274px,#ff4cdb 292px,#ff3abd 312px,#ff279f 338px,#ff1683 372px,#ff066a 416px,#ff005e 442px,#ff0048 510px,#ff0034 606px,#ff002a 677px)"></i>
<i style="top:188px;left:28px;width:674px;background:linear-gradient(90deg,#00d9ff 0px,#00a1ff 138px,#009bff 152px,#7380ff 210px,#eb64ff 266px,#fd60ff 274px,#ff5efd 276px,#ff49da 294px,#ff35ba 316px,#ff229b 344px,#ff1281 378px,#ff0367 424px,#ff005f 442px,#ff0049 510px,#ff0035 606px,#ff002b 674px)"></i>
<i style="top:190px;left:28px;width:672px;background:linear-gradient(90deg,#00d6ff 0px,#009eff 138px,#0098ff 152px,#6181ff 202px,#da64ff 260px,#fd5cff 276px,#ff5afd 278px,#ff46da 296px,#ff33ba 318px,#ff219c 346px,#ff1080 382px,#ff0167 428px,#ff0050 490px,#ff003b 576px,#ff002c 672px)"></i>
<i style="top:192px;left:29px;width:669px;background:linear-gradient(90deg,#00d2ff 0px,#009aff 140px,#0195ff 152px,#7579ff 212px,#ee5cff 270px,#ff58ff 278px,#ff44dc 296px,#ff31bc 318px,#ff1f9e 346px,#ff0f82 382px,#ff0068 428px,#ff0051 490px,#ff003c 576px,#ff002d 669px)"></i>
<i style="top:194px;left:30px;width:667px;background:linear-gradient(90deg,#00ceff 0px,#0096ff 142px,#0092ff 150px,#0291ff 152px,#7875ff 214px,#f058ff 272px,#fd55ff 278px,#ff53fc 280px,#ff40db 298px,#ff2ebb 320px,#ff1d9e 348px,#ff0d82 384px,#ff006a 428px,#ff0052 490px,#ff003d 576px,#ff002e 667px)"></i>
<i style="top:196px;left:31px;width:664px;background:linear-gradient(90deg,#00cbff 0px,#0092ff 142px,#008fff 150px,#6577ff 204px,#de5aff 264px,#ff51fe 280px,#ff3edd 298px,#ff2dbd 320px,#ff1c9f 348px,#ff0c83 384px,#ff006c 426px,#ff0055 486px,#ff003f 570px,#ff0030 664px)"></i>
<i style="top:198px;left:31px;width:662px;background:linear-gradient(90deg,#00c7ff 0px,#008fff 144px,#008cff 150px,#4c7aff 192px,#c25dff 252px,#ff4efe 282px,#ff3cdd 300px,#ff2bbe 322px,#ff1aa0 350px,#ff0b84 386px,#ff006f 424px,#ff0057 484px,#ff0041 566px,#ff0031 662px)"></i>
<i style="top:200px;left:32px;width:659px;background:linear-gradient(90deg,#00c4ff 0px,#008cff 144px,#0089ff 150px,#766dff 214px,#ed50ff 274px,#fe4cff 282px,#ff37d8 304px,#ff25b8 328px,#ff159a 358px,#ff077f 396px,#ff0071 422px,#ff0059 480px,#ff0043 560px,#ff0032 659px)"></i>
<i style="top:202px;left:33px;width:656px;background:linear-gradient(90deg,#00c0ff 0px,#0088ff 146px,#0186ff 150px,#766aff 214px,#f04cff 276px,#ff48fe 284px,#ff37dd 302px,#ff27bf 324px,#ff17a1 352px,#ff0986 388px,#ff0073 420px,#ff005b 478px,#ff0045 556px,#ff0033 656px)"></i>
<i style="top:204px;left:34px;width:653px;background:linear-gradient(90deg,#00bdff 0px,#0084ff 148px,#546fff 196px,#ca53ff 258px,#fe46ff 284px,#ff32d9 306px,#ff22b9 330px,#ff129c 360px,#ff0481 398px,#ff0076 418px,#ff005d 474px,#ff0048 550px,#ff0034 653px)"></i>
<i style="top:206px;left:35px;width:650px;background:linear-gradient(90deg,#00baff 0px,#0081ff 148px,#7564ff 214px,#ec47ff 276px,#fc43ff 284px,#ff42fe 286px,#ff30db 306px,#ff20bb 330px,#ff119d 360px,#ff0482 398px,#ff0078 416px,#ff005f 472px,#ff0049 548px,#ff0036 650px)"></i>
<i style="top:208px;left:36px;width:648px;background:linear-gradient(90deg,#00b7ff 0px,#007fff 146px,#017eff 148px,#7961ff 216px,#f343ff 280px,#ff40ff 286px,#ff2dd9 308px,#ff1eba 332px,#ff0f9d 362px,#ff0282 400px,#ff0079 416px,#ff0060 472px,#ff004a 548px,#ff0037 648px)"></i>
<i style="top:210px;left:37px;width:645px;background:linear-gradient(90deg,#00b4ff 0px,#007cff 146px,#5c65ff 200px,#d248ff 264px,#fd3eff 286px,#ff3cfd 288px,#ff2cdb 308px,#ff1dbc 332px,#ff0e9f 362px,#ff0184 400px,#ff006a 450px,#ff0053 518px,#ff003e 612px,#ff0038 645px)"></i>
<i style="top:212px;left:37px;width:643px;background:linear-gradient(90deg,#00b1ff 0px,#007aff 146px,#1674ff 160px,#8c57ff 228px,#fd3bff 288px,#ff3afd 290px,#ff2adb 310px,#ff1bbc 334px,#ff0d9f 364px,#ff0083 404px,#ff0069 456px,#ff0052 526px,#ff003d 622px,#ff0039 643px)"></i>
<i style="top:214px;left:38px;width:640px;background:linear-gradient(90deg,#00aeff 0px,#0077ff 146px,#735bff 214px,#ec3dff 280px,#ff38ff 290px,#ff28dd 310px,#ff1abe 334px,#ff0ca1 364px,#ff0086 402px,#ff006c 452px,#ff0054 520px,#ff003f 614px,#ff003b 640px)"></i>
<i style="top:216px;left:39px;width:637px;background:linear-gradient(90deg,#00abff 0px,#0175ff 146px,#7657ff 216px,#ee3aff 282px,#fd36ff 290px,#ff35fd 292px,#ff25dc 312px,#ff16bb 338px,#ff099d 370px,#ff0088 400px,#ff006e 450px,#ff0057 516px,#ff0041 608px,#ff003c 637px)"></i>
<i style="top:218px;left:40px;width:634px;background:linear-gradient(90deg,#00a8ff 0px,#0073ff 144px,#4a60ff 190px,#c143ff 258px,#ff33ff 292px,#ff24de 312px,#ff15bd 338px,#ff089f 370px,#ff008b 398px,#ff0070 448px,#ff0058 514px,#ff0043 604px,#ff003d 634px)"></i>
<i style="top:220px;left:41px;width:631px;background:linear-gradient(90deg,#00a5ff 0px,#0070ff 144px,#7653ff 216px,#ef35ff 284px,#fe31ff 292px,#ff29ef 302px,#ff1bcf 324px,#ff0eb0 352px,#ff0193 388px,#ff0078 434px,#ff0060 494px,#ff0049 576px,#ff003e 631px)"></i>
<i style="top:222px;left:42px;width:629px;background:linear-gradient(90deg,#00a2ff 0px,#016eff 144px,#7651ff 216px,#ed33ff 284px,#ff2efe 294px,#ff1fdb 316px,#ff11bc 342px,#ff059e 374px,#ff0091 392px,#ff0076 440px,#ff005e 502px,#ff0048 586px,#ff0040 629px)"></i>
<i style="top:224px;left:42px;width:627px;background:linear-gradient(90deg,#00a0ff 0px,#016cff 144px,#784eff 218px,#f12fff 288px,#ff2cfe 296px,#ff1ddb 318px,#ff10bc 344px,#ff039d 378px,#ff0093 392px,#ff0079 438px,#ff0060 500px,#ff0049 584px,#ff0041 627px)"></i>
<i style="top:226px;left:43px;width:624px;background:linear-gradient(90deg,#009dff 0px,#006aff 142px,#0868ff 148px,#7e4aff 222px,#f72cff 292px,#fe2aff 296px,#ff19d7 322px,#ff0cb7 350px,#ff009a 384px,#ff007f 428px,#ff0066 486px,#ff004f 564px,#ff0042 624px)"></i>
<i style="top:228px;left:44px;width:621px;background:linear-gradient(90deg,#009bff 0px,#0068ff 142px,#6d4cff 212px,#e72dff 284px,#ff27fe 298px,#ff19dc 320px,#ff0cbd 346px,#ff009f 380px,#ff0082 424px,#ff0069 480px,#ff0052 556px,#ff0044 621px)"></i>
<i style="top:230px;left:45px;width:618px;background:linear-gradient(90deg,#0098ff 0px,#0166ff 142px,#7748ff 218px,#f029ff 290px,#ff25ff 298px,#ff17db 322px,#ff0aba 350px,#ff00a0 380px,#ff0085 422px,#ff006b 478px,#ff0054 552px,#ff0045 618px)"></i>
<i style="top:232px;left:46px;width:615px;background:linear-gradient(90deg,#0096ff 0px,#0064ff 140px,#145fff 154px,#8a41ff 230px,#fd24ff 298px,#ff23fe 300px,#ff15dc 322px,#ff09bc 350px,#ff00a3 378px,#ff0087 420px,#ff006d 476px,#ff0055 550px,#ff0046 615px)"></i>
<i style="top:234px;left:47px;width:613px;background:linear-gradient(90deg,#0093ff 0px,#0062ff 140px,#7045ff 214px,#ea26ff 288px,#ff21ff 300px,#ff13db 324px,#ff07bb 352px,#ff00a6 376px,#ff0089 418px,#ff006f 472px,#ff0058 544px,#ff0048 613px)"></i>
<i style="top:236px;left:47px;width:611px;background:linear-gradient(90deg,#0091ff 0px,#0060ff 140px,#5f48ff 204px,#d629ff 278px,#ff1fff 302px,#ff12de 324px,#ff06be 352px,#ff00aa 374px,#ff008e 414px,#ff0073 466px,#ff005b 536px,#ff0049 611px)"></i>
<i style="top:238px;left:48px;width:608px;background:linear-gradient(90deg,#008fff 0px,#005eff 140px,#7840ff 220px,#f021ff 294px,#fd1dff 302px,#ff1cfd 304px,#ff0fda 328px,#ff04bb 356px,#ff00ad 372px,#ff0090 412px,#ff0075 464px,#ff005d 532px,#ff004a 608px)"></i>
<i style="top:240px;left:49px;width:605px;background:linear-gradient(90deg,#008cff 0px,#005dff 138px,#075bff 144px,#7e3cff 224px,#f51eff 298px,#ff1bff 304px,#ff0edc 328px,#ff03bc 356px,#ff00b0 370px,#ff0092 410px,#ff0077 462px,#ff005f 530px,#ff004c 605px)"></i>
<i style="top:242px;left:50px;width:602px;background:linear-gradient(90deg,#008aff 0px,#005bff 138px,#6641ff 208px,#dd22ff 284px,#fe19ff 304px,#ff12eb 318px,#ff06ca 344px,#ff00b6 364px,#ff0099 402px,#ff007e 450px,#ff0065 514px,#ff004e 600px,#ff004d 602px)"></i>
<i style="top:244px;left:51px;width:599px;background:linear-gradient(90deg,#0088ff 0px,#0059ff 138px,#783aff 220px,#ef1bff 296px,#ff17fe 306px,#ff0bdc 330px,#ff00bb 360px,#ff009e 396px,#ff0083 442px,#ff0069 504px,#ff0052 586px,#ff004f 599px)"></i>
<i style="top:246px;left:52px;width:596px;background:linear-gradient(90deg,#0085ff 0px,#0058ff 136px,#0755ff 142px,#7d37ff 224px,#f717ff 302px,#fe16ff 306px,#ff08d8 334px,#ff00bf 358px,#ff00a1 394px,#ff0085 440px,#ff006b 500px,#ff0054 580px,#ff0050 596px)"></i>
<i style="top:248px;left:53px;width:594px;background:linear-gradient(90deg,#0083ff 0px,#0056ff 136px,#693aff 210px,#e01cff 288px,#ff13fe 308px,#ff08dc 332px,#ff00c2 356px,#ff00a3 392px,#ff0087 438px,#ff006d 498px,#ff0055 578px,#ff0051 594px)"></i>
<i style="top:250px;left:54px;width:591px;background:linear-gradient(90deg,#0081ff 0px,#0054ff 136px,#7735ff 220px,#ee16ff 298px,#fe12ff 308px,#ff05d9 336px,#ff00c5 354px,#ff00a6 390px,#ff0089 436px,#ff006f 494px,#ff0058 572px,#ff0053 591px)"></i>
<i style="top:252px;left:55px;width:588px;background:linear-gradient(90deg,#007fff 0px,#0053ff 134px,#124eff 148px,#892fff 232px,#ff10fe 310px,#ff05dd 334px,#ff00cb 350px,#ff00ac 384px,#ff008f 428px,#ff0074 484px,#ff005c 558px,#ff0055 588px)"></i>
<i style="top:254px;left:56px;width:585px;background:linear-gradient(90deg,#007dff 0px,#0051ff 134px,#6b35ff 212px,#e216ff 292px,#ff0eff 310px,#ff02d9 338px,#ff00ca 352px,#ff00ac 386px,#ff008f 430px,#ff0075 486px,#ff005c 560px,#ff0056 585px)"></i>
<i style="top:256px;left:57px;width:582px;background:linear-gradient(90deg,#007bff 0px,#014fff 134px,#7730ff 220px,#f110ff 302px,#ff0cfe 312px,#ff01db 338px,#ff00ba 370px,#ff009c 410px,#ff0081 460px,#ff0067 526px,#ff0058 582px)"></i>
<i style="top:258px;left:58px;width:579px;background:linear-gradient(90deg,#0079ff 0px,#004eff 132px,#473bff 186px,#bf1cff 270px,#ff0bff 312px,#ff00dc 338px,#ff00bb 370px,#ff009d 410px,#ff0082 460px,#ff0068 526px,#ff0059 579px)"></i>
<i style="top:260px;left:59px;width:576px;background:linear-gradient(90deg,#0077ff 0px,#004cff 132px,#712fff 216px,#e80fff 298px,#fd0aff 312px,#ff08fa 316px,#ff00dd 338px,#ff00bd 370px,#ff009e 410px,#ff0083 460px,#ff0069 526px,#ff005b 576px)"></i>
<i style="top:262px;left:60px;width:574px;background:linear-gradient(90deg,#0075ff 0px,#014aff 132px,#762cff 220px,#f00cff 304px,#ff08ff 314px,#ff00e1 336px,#ff00c1 366px,#ff00a3 404px,#ff0088 452px,#ff006d 516px,#ff005c 574px)"></i>
<i style="top:264px;left:61px;width:571px;background:linear-gradient(90deg,#0073ff 0px,#0049ff 130px,#5034ff 192px,#c814ff 278px,#fe06ff 314px,#ff00ea 330px,#ff00c8 360px,#ff00aa 396px,#ff008e 442px,#ff0073 502px,#ff005e 571px)"></i>
<i style="top:266px;left:62px;width:568px;background:linear-gradient(90deg,#0071ff 0px,#0048ff 130px,#7329ff 218px,#eb0aff 302px,#ff04ff 316px,#ff00eb 330px,#ff00ca 360px,#ff00ab 396px,#ff008f 442px,#ff0074 502px,#ff005f 568px)"></i>
<i style="top:268px;left:63px;width:565px;background:linear-gradient(90deg,#006fff 0px,#0146ff 130px,#7627ff 220px,#ef07ff 306px,#fe03ff 316px,#ff00ef 328px,#ff00cf 356px,#ff00af 392px,#ff0092 438px,#ff0077 496px,#ff0061 565px)"></i>
<i style="top:270px;left:64px;width:562px;background:linear-gradient(90deg,#006dff 0px,#0045ff 128px,#592eff 198px,#d10eff 286px,#ff01fe 318px,#ff00dd 344px,#ff00be 376px,#ff00a0 416px,#ff0084 468px,#ff006a 536px,#ff0063 562px)"></i>
<i style="top:272px;left:64px;width:560px;background:linear-gradient(90deg,#006cff 0px,#0143ff 130px,#7724ff 222px,#f104ff 310px,#ff00fe 320px,#ff00dd 346px,#ff00bc 380px,#ff009e 422px,#ff0082 476px,#ff0068 546px,#ff0064 560px)"></i>
<i style="top:274px;left:65px;width:557px;background:linear-gradient(90deg,#006aff 0px,#0042ff 128px,#6a26ff 212px,#e206ff 300px,#fe00ff 320px,#ff00da 350px,#ff00ba 384px,#ff009d 426px,#ff0081 480px,#ff0067 552px,#ff0066 557px)"></i>
<i style="top:276px;left:66px;width:555px;background:linear-gradient(90deg,#0068ff 0px,#0041ff 128px,#7721ff 222px,#ef01ff 310px,#ff00fe 322px,#ff00db 350px,#ff00bb 384px,#ff009e 426px,#ff0082 480px,#ff0069 550px,#ff0067 555px)"></i>
<i style="top:278px;left:67px;width:552px;background:linear-gradient(90deg,#0066ff 0px,#0040ff 126px,#462dff 184px,#bf0dff 276px,#f300ff 314px,#ff00ff 322px,#ff00da 352px,#ff00bb 386px,#ff009c 430px,#ff0081 486px,#ff0069 552px)"></i>
<i style="top:280px;left:68px;width:549px;background:linear-gradient(90deg,#0065ff 0px,#003fff 126px,#6c21ff 214px,#e401ff 304px,#ff00fe 324px,#ff00dc 352px,#ff00bc 386px,#ff009e 430px,#ff0082 486px,#ff006b 549px)"></i>
<i style="top:282px;left:69px;width:546px;background:linear-gradient(90deg,#0063ff 0px,#003dff 126px,#771dff 222px,#e900ff 308px,#ff00ff 324px,#ff00dd 352px,#ff00bd 386px,#ff009f 430px,#ff0082 486px,#ff006d 546px)"></i>
<i style="top:284px;left:70px;width:543px;background:linear-gradient(90deg,#0061ff 0px,#003cff 124px,#4e27ff 190px,#c707ff 284px,#e500ff 306px,#fe00ff 324px,#ff00f8 330px,#ff00d6 360px,#ff00b6 396px,#ff0099 442px,#ff007e 500px,#ff006e 543px)"></i>
<i style="top:286px;left:71px;width:540px;background:linear-gradient(90deg,#0060ff 0px,#003bff 124px,#711cff 218px,#de00ff 302px,#ff00ff 326px,#ff00dd 354px,#ff00bc 390px,#ff009e 434px,#ff0083 490px,#ff0070 540px)"></i>
<i style="top:288px;left:72px;width:538px;background:linear-gradient(90deg,#005eff 0px,#0139ff 124px,#761aff 222px,#db00ff 300px,#fe00ff 326px,#ff00d6 362px,#ff00b6 400px,#ff0099 446px,#ff007d 506px,#ff0072 538px)"></i>
<i style="top:290px;left:74px;width:534px;background:linear-gradient(90deg,#005cff 0px,#0038ff 122px,#7718ff 222px,#d600ff 296px,#fe00ff 326px,#ff00d8 360px,#ff00b9 396px,#ff009b 442px,#ff0080 500px,#ff0074 534px)"></i>
<i style="top:292px;left:75px;width:531px;background:linear-gradient(90deg,#005bff 0px,#0137ff 122px,#7717ff 222px,#d000ff 292px,#ff00ff 328px,#ff00db 358px,#ff00bc 394px,#ff009d 440px,#ff0082 498px,#ff0075 531px)"></i>
<i style="top:294px;left:76px;width:528px;background:linear-gradient(90deg,#0059ff 0px,#0036ff 120px,#691aff 210px,#cc00ff 290px,#fe00ff 328px,#ff00d9 362px,#ff00b8 400px,#ff009a 448px,#ff007f 508px,#ff0077 528px)"></i>
<i style="top:296px;left:77px;width:525px;background:linear-gradient(90deg,#0058ff 0px,#0035ff 120px,#7715ff 222px,#c700ff 286px,#ff00fe 330px,#ff00dc 360px,#ff00bc 396px,#ff009e 442px,#ff0083 500px,#ff0079 525px)"></i>
<i style="top:298px;left:78px;width:522px;background:linear-gradient(90deg,#0056ff 0px,#0134ff 120px,#7714ff 222px,#c300ff 284px,#fe00ff 330px,#ff00d9 364px,#ff00b9 402px,#ff009b 450px,#ff007f 512px,#ff007b 522px)"></i>
<i style="top:300px;left:79px;width:519px;background:linear-gradient(90deg,#0055ff 0px,#0033ff 118px,#6b16ff 212px,#c000ff 282px,#ff00fe 332px,#ff00dc 362px,#ff00bb 400px,#ff009e 446px,#ff0082 506px,#ff007d 519px)"></i>
<i style="top:302px;left:80px;width:517px;background:linear-gradient(90deg,#0053ff 0px,#0032ff 118px,#7712ff 222px,#ba00ff 278px,#ff00ff 332px,#ff00db 364px,#ff00bb 402px,#ff009d 450px,#ff0081 510px,#ff007f 517px)"></i>
<i style="top:304px;left:81px;width:514px;background:linear-gradient(90deg,#0052ff 0px,#0130ff 118px,#7710ff 222px,#b700ff 276px,#ff00fe 334px,#ff00dc 364px,#ff00bc 402px,#ff009e 450px,#ff0082 510px,#ff0081 514px)"></i>
<i style="top:306px;left:82px;width:511px;background:linear-gradient(90deg,#0050ff 0px,#0030ff 116px,#6d12ff 214px,#b200ff 272px,#ff00ff 334px,#ff00dc 366px,#ff00bc 404px,#ff009e 452px,#ff0083 511px)"></i>
<i style="top:308px;left:83px;width:508px;background:linear-gradient(90deg,#004fff 0px,#002fff 116px,#760eff 222px,#af00ff 270px,#fe00ff 334px,#ff00e3 360px,#ff00c3 396px,#ff00a4 442px,#ff0088 500px,#ff0085 508px)"></i>
<i style="top:310px;left:84px;width:505px;background:linear-gradient(90deg,#004eff 0px,#012dff 116px,#790dff 224px,#ac00ff 268px,#ff00ff 336px,#ff00dc 368px,#ff00bc 406px,#ff009e 454px,#ff0087 505px)"></i>
<i style="top:312px;left:85px;width:502px;background:linear-gradient(90deg,#004cff 0px,#002dff 114px,#720eff 218px,#a700ff 264px,#fe00ff 336px,#ff00d7 374px,#ff00b8 414px,#ff009a 464px,#ff0089 502px)"></i>
<i style="top:314px;left:86px;width:499px;background:linear-gradient(90deg,#004bff 0px,#012cff 114px,#760bff 222px,#a400ff 262px,#ff00ff 338px,#ff00dc 370px,#ff00bb 410px,#ff009d 460px,#ff008b 499px)"></i>
<i style="top:316px;left:87px;width:497px;background:linear-gradient(90deg,#004aff 0px,#012aff 114px,#780aff 224px,#9f00ff 258px,#fe00ff 338px,#ff00d8 376px,#ff00b8 416px,#ff009a 468px,#ff008d 497px)"></i>
<i style="top:318px;left:88px;width:494px;background:linear-gradient(90deg,#0048ff 0px,#002aff 112px,#740aff 220px,#9c00ff 256px,#ff00fe 340px,#ff00dc 372px,#ff00bc 412px,#ff009e 462px,#ff008f 494px)"></i>
<i style="top:320px;left:89px;width:491px;background:linear-gradient(90deg,#0047ff 0px,#0129ff 112px,#7808ff 224px,#9a00ff 254px,#fe00ff 340px,#ff00da 376px,#ff00ba 416px,#ff009c 468px,#ff0091 491px)"></i>
<i style="top:322px;left:91px;width:487px;background:linear-gradient(90deg,#0045ff 0px,#0028ff 110px,#7707ff 222px,#9600ff 250px,#ff00ff 340px,#ff00da 376px,#ff00b9 418px,#ff009b 470px,#ff0093 487px)"></i>
<i style="top:324px;left:92px;width:484px;background:linear-gradient(90deg,#0044ff 0px,#0127ff 110px,#7706ff 222px,#9100ff 246px,#ff00fe 342px,#ff00db 376px,#ff00ba 418px,#ff009c 470px,#ff0096 484px)"></i>
<i style="top:326px;left:93px;width:481px;background:linear-gradient(90deg,#0043ff 0px,#0026ff 108px,#6c08ff 212px,#8f00ff 244px,#ff00ff 342px,#ff00da 378px,#ff00ba 420px,#ff009c 472px,#ff0098 481px)"></i>
<i style="top:328px;left:94px;width:478px;background:linear-gradient(90deg,#0042ff 0px,#0025ff 108px,#7605ff 222px,#8c00ff 242px,#ff00fe 344px,#ff00db 378px,#ff00bb 420px,#ff009d 472px,#ff009a 478px)"></i>
<i style="top:330px;left:96px;width:475px;background:linear-gradient(90deg,#0040ff 0px,#0024ff 106px,#7703ff 222px,#8900ff 238px,#ff00fe 344px,#ff00db 378px,#ff00bb 420px,#ff009d 472px,#ff009c 475px)"></i>
<i style="top:332px;left:97px;width:472px;background:linear-gradient(90deg,#003fff 0px,#0123ff 106px,#7702ff 222px,#8900ff 238px,#ff00ff 344px,#ff00dc 378px,#ff00bc 420px,#ff009e 472px)"></i>
<i style="top:334px;left:98px;width:469px;background:linear-gradient(90deg,#003eff 0px,#0023ff 104px,#6407ff 204px,#8200ff 232px,#fc00ff 342px,#ff00fe 346px,#ff00dc 380px,#ff00bc 422px,#ff00a1 469px)"></i>
<i style="top:336px;left:99px;width:466px;background:linear-gradient(90deg,#003dff 0px,#0022ff 104px,#7701ff 222px,#ef00ff 332px,#ff00ff 346px,#ff00dd 380px,#ff00bd 422px,#ff00a3 466px)"></i>
<i style="top:338px;left:100px;width:463px;background:linear-gradient(90deg,#003cff 0px,#0121ff 104px,#7700ff 222px,#f100ff 334px,#fe00ff 346px,#ff00d8 386px,#ff00b8 430px,#ff00a5 463px)"></i>
<i style="top:340px;left:101px;width:460px;background:linear-gradient(90deg,#003aff 0px,#0020ff 102px,#6903ff 208px,#7900ff 224px,#f200ff 336px,#ff00ff 348px,#ff00dd 382px,#ff00bd 424px,#ff00a8 460px)"></i>
<i style="top:342px;left:102px;width:457px;background:linear-gradient(90deg,#0039ff 0px,#001fff 102px,#7500ff 220px,#ef00ff 334px,#fe00ff 348px,#ff00d9 388px,#ff00b9 432px,#ff00aa 457px)"></i>
<i style="top:344px;left:103px;width:455px;background:linear-gradient(90deg,#0038ff 0px,#011eff 102px,#7100ff 216px,#e900ff 330px,#ff00fe 350px,#ff00db 386px,#ff00bb 430px,#ff00ac 455px)"></i>
<i style="top:346px;left:104px;width:452px;background:linear-gradient(90deg,#0037ff 0px,#001eff 100px,#6b00ff 210px,#e400ff 326px,#ff00ff 350px,#ff00db 388px,#ff00bb 432px,#ff00af 452px)"></i>
<i style="top:348px;left:105px;width:449px;background:linear-gradient(90deg,#0036ff 0px,#001dff 100px,#6d00ff 212px,#e600ff 328px,#ff00fe 352px,#ff00dc 388px,#ff00bc 432px,#ff00b1 449px)"></i>
<i style="top:350px;left:107px;width:445px;background:linear-gradient(90deg,#0035ff 0px,#001cff 98px,#6a00ff 208px,#e100ff 324px,#ff00fe 352px,#ff00dc 388px,#ff00bc 432px,#ff00b4 445px)"></i>
<i style="top:352px;left:108px;width:442px;background:linear-gradient(90deg,#0034ff 0px,#011bff 98px,#6600ff 204px,#df00ff 322px,#ff00ff 352px,#ff00db 390px,#ff00ba 436px,#ff00b7 442px)"></i>
<i style="top:354px;left:109px;width:439px;background:linear-gradient(90deg,#0033ff 0px,#011aff 98px,#6400ff 202px,#dc00ff 320px,#ff00fe 354px,#ff00dc 390px,#ff00bb 436px,#ff00b9 439px)"></i>
<i style="top:356px;left:110px;width:437px;background:linear-gradient(90deg,#0032ff 0px,#001aff 96px,#6000ff 198px,#d900ff 318px,#ff00ff 354px,#ff00dd 390px,#ff00bc 436px,#ff00bb 437px)"></i>
<i style="top:358px;left:111px;width:434px;background:linear-gradient(90deg,#0031ff 0px,#0119ff 96px,#5e00ff 196px,#d600ff 316px,#ff00fe 356px,#ff00db 394px,#ff00be 434px)"></i>
<i style="top:360px;left:113px;width:430px;background:linear-gradient(90deg,#002fff 0px,#0018ff 94px,#5b00ff 192px,#d400ff 314px,#fe00ff 354px,#ff00d8 398px,#ff00c1 430px)"></i>
<i style="top:362px;left:114px;width:427px;background:linear-gradient(90deg,#002eff 0px,#0118ff 94px,#5900ff 190px,#d200ff 312px,#ff00ff 356px,#ff00dc 394px,#ff00c4 427px)"></i>
<i style="top:364px;left:115px;width:424px;background:linear-gradient(90deg,#002dff 0px,#0017ff 92px,#5600ff 186px,#cf00ff 310px,#fe00ff 356px,#ff00d9 398px,#ff00c7 424px)"></i>
<i style="top:366px;left:116px;width:421px;background:linear-gradient(90deg,#002cff 0px,#0016ff 92px,#5400ff 184px,#cc00ff 308px,#ff00ff 358px,#ff00dc 396px,#ff00ca 421px)"></i>
<i style="top:368px;left:118px;width:417px;background:linear-gradient(90deg,#002bff 0px,#0016ff 90px,#5100ff 180px,#cb00ff 306px,#ff00fe 358px,#ff00dc 396px,#ff00cd 417px)"></i>
<i style="top:370px;left:119px;width:415px;background:linear-gradient(90deg,#002aff 0px,#0115ff 90px,#5000ff 178px,#c800ff 304px,#ff00ff 358px,#ff00da 400px,#ff00cf 415px)"></i>
<i style="top:372px;left:120px;width:412px;background:linear-gradient(90deg,#0029ff 0px,#0014ff 88px,#4c00ff 174px,#c300ff 300px,#ff00fe 360px,#ff00dc 398px,#ff00d2 412px)"></i>
<i style="top:374px;left:121px;width:409px;background:linear-gradient(90deg,#0028ff 0px,#0014ff 88px,#4a00ff 172px,#c300ff 300px,#ff00ff 360px,#ff00dc 400px,#ff00d5 409px)"></i>
<i style="top:376px;left:122px;width:406px;background:linear-gradient(90deg,#0028ff 0px,#0113ff 88px,#4700ff 168px,#be00ff 296px,#ff00fe 362px,#ff00db 402px,#ff00d8 406px)"></i>
<i style="top:378px;left:123px;width:403px;background:linear-gradient(90deg,#0027ff 0px,#0013ff 86px,#4500ff 166px,#be00ff 296px,#ff00ff 362px,#ff00dc 402px,#ff00db 403px)"></i>
<i style="top:380px;left:125px;width:399px;background:linear-gradient(90deg,#0026ff 0px,#0111ff 86px,#4300ff 162px,#bb00ff 292px,#ff00ff 362px,#ff00de 399px)"></i>
<i style="top:382px;left:126px;width:396px;background:linear-gradient(90deg,#0025ff 0px,#0011ff 84px,#4100ff 160px,#ba00ff 292px,#ff00fe 364px,#ff00e2 396px)"></i>
<i style="top:384px;left:127px;width:394px;background:linear-gradient(90deg,#0024ff 0px,#0110ff 84px,#3e00ff 156px,#b600ff 288px,#ff00ff 364px,#ff00e4 394px)"></i>
<i style="top:386px;left:128px;width:391px;background:linear-gradient(90deg,#0023ff 0px,#0110ff 84px,#3d00ff 154px,#b500ff 288px,#fe00ff 364px,#ff00e7 391px)"></i>
<i style="top:388px;left:129px;width:388px;background:linear-gradient(90deg,#0022ff 0px,#000fff 82px,#3900ff 150px,#b100ff 284px,#ff00ff 366px,#ff00eb 388px)"></i>
<i style="top:390px;left:130px;width:385px;background:linear-gradient(90deg,#0021ff 0px,#010fff 82px,#3800ff 148px,#b100ff 284px,#fe00ff 366px,#ff00ee 385px)"></i>
<i style="top:392px;left:131px;width:382px;background:linear-gradient(90deg,#0020ff 0px,#010eff 82px,#3500ff 144px,#ad00ff 280px,#ff00fe 368px,#ff00f2 382px)"></i>
<i style="top:394px;left:133px;width:378px;background:linear-gradient(90deg,#001fff 0px,#010dff 80px,#3400ff 142px,#ab00ff 278px,#ff00fe 368px,#ff00f5 378px)"></i>
<i style="top:396px;left:134px;width:375px;background:linear-gradient(90deg,#001fff 0px,#000dff 78px,#3100ff 138px,#a900ff 276px,#ff00ff 368px,#ff00f9 375px)"></i>
<i style="top:398px;left:136px;width:372px;background:linear-gradient(90deg,#001dff 0px,#010cff 78px,#2f00ff 134px,#a600ff 272px,#ff00ff 368px,#ff00fb 372px)"></i>
<i style="top:400px;left:137px;width:369px;background:linear-gradient(90deg,#001dff 0px,#000cff 76px,#2e00ff 132px,#a600ff 272px,#ff00ff 369px)"></i>
<i style="top:402px;left:138px;width:366px;background:linear-gradient(90deg,#001cff 0px,#010bff 76px,#2b00ff 128px,#a200ff 268px,#fb00ff 366px)"></i>
<i style="top:404px;left:139px;width:363px;background:linear-gradient(90deg,#001bff 0px,#000bff 74px,#2900ff 126px,#a200ff 268px,#f800ff 363px)"></i>
<i style="top:406px;left:141px;width:359px;background:linear-gradient(90deg,#001aff 0px,#010aff 74px,#2700ff 122px,#9f00ff 264px,#f400ff 359px)"></i>
<i style="top:408px;left:142px;width:356px;background:linear-gradient(90deg,#0019ff 0px,#000aff 72px,#2600ff 120px,#9e00ff 264px,#f000ff 356px)"></i>
<i style="top:410px;left:143px;width:354px;background:linear-gradient(90deg,#0019ff 0px,#0109ff 72px,#2300ff 116px,#9b00ff 260px,#ee00ff 354px)"></i>
<i style="top:412px;left:144px;width:351px;background:linear-gradient(90deg,#0018ff 0px,#0108ff 72px,#2200ff 114px,#9a00ff 260px,#ea00ff 351px)"></i>
<i style="top:414px;left:146px;width:347px;background:linear-gradient(90deg,#0017ff 0px,#0108ff 70px,#2000ff 110px,#9800ff 256px,#e700ff 347px)"></i>
<i style="top:416px;left:147px;width:344px;background:linear-gradient(90deg,#0016ff 0px,#0007ff 68px,#1f00ff 108px,#9600ff 254px,#e400ff 344px)"></i>
<i style="top:418px;left:149px;width:340px;background:linear-gradient(90deg,#0015ff 0px,#0107ff 68px,#1d00ff 104px,#9400ff 252px,#e000ff 340px)"></i>
<i style="top:420px;left:150px;width:337px;background:linear-gradient(90deg,#0014ff 0px,#0006ff 66px,#1a00ff 100px,#9100ff 248px,#dd00ff 337px)"></i>
<i style="top:422px;left:151px;width:334px;background:linear-gradient(90deg,#0014ff 0px,#0106ff 66px,#1900ff 98px,#9100ff 248px,#da00ff 334px)"></i>
<i style="top:424px;left:153px;width:331px;background:linear-gradient(90deg,#0013ff 0px,#0005ff 64px,#1700ff 94px,#8e00ff 244px,#d800ff 331px)"></i>
<i style="top:426px;left:154px;width:328px;background:linear-gradient(90deg,#0012ff 0px,#0105ff 64px,#1600ff 92px,#8e00ff 244px,#d400ff 328px)"></i>
<i style="top:428px;left:155px;width:325px;background:linear-gradient(90deg,#0011ff 0px,#0004ff 62px,#1500ff 90px,#8c00ff 242px,#d100ff 325px)"></i>
<i style="top:430px;left:157px;width:321px;background:linear-gradient(90deg,#0011ff 0px,#0104ff 62px,#1300ff 86px,#8b00ff 240px,#ce00ff 321px)"></i>
<i style="top:432px;left:158px;width:318px;background:linear-gradient(90deg,#0010ff 0px,#0003ff 60px,#1200ff 84px,#8900ff 238px,#cb00ff 318px)"></i>
<i style="top:434px;left:159px;width:315px;background:linear-gradient(90deg,#000fff 0px,#0103ff 60px,#1100ff 82px,#8700ff 236px,#c800ff 315px)"></i>
<i style="top:436px;left:161px;width:311px;background:linear-gradient(90deg,#000eff 0px,#0002ff 58px,#1100ff 80px,#8800ff 236px,#c500ff 311px)"></i>
<i style="top:438px;left:162px;width:309px;background:linear-gradient(90deg,#000eff 0px,#0102ff 58px,#1500ff 86px,#8d00ff 242px,#c300ff 309px)"></i>
<i style="top:440px;left:164px;width:305px;background:linear-gradient(90deg,#000dff 0px,#0101ff 56px,#2e00ff 118px,#a500ff 272px,#c000ff 305px)"></i>
<i style="top:442px;left:165px;width:302px;background:linear-gradient(90deg,#000cff 0px,#0101ff 56px,#7900ff 216px,#bd00ff 302px)"></i>
<i style="top:444px;left:167px;width:298px;background:linear-gradient(90deg,#000bff 0px,#0100ff 54px,#7800ff 214px,#ba00ff 298px)"></i>
<i style="top:446px;left:168px;width:295px;background:linear-gradient(90deg,#000bff 0px,#0000ff 52px,#7600ff 212px,#b700ff 295px)"></i>
<i style="top:448px;left:170px;width:291px;background:linear-gradient(90deg,#000aff 0px,#0000ff 50px,#7200ff 206px,#b500ff 291px)"></i>
<i style="top:450px;left:171px;width:288px;background:linear-gradient(90deg,#0009ff 0px,#0000ff 50px,#7700ff 212px,#b200ff 288px)"></i>
<i style="top:452px;left:173px;width:285px;background:linear-gradient(90deg,#0008ff 0px,#0000ff 48px,#7800ff 212px,#b000ff 285px)"></i>
<i style="top:454px;left:174px;width:282px;background:linear-gradient(90deg,#0008ff 0px,#0000ff 46px,#5d00ff 176px,#ad00ff 282px)"></i>
<i style="top:456px;left:176px;width:278px;background:linear-gradient(90deg,#0007ff 0px,#0000ff 42px,#0300ff 50px,#7a00ff 214px,#ab00ff 278px)"></i>
<i style="top:458px;left:177px;width:275px;background:linear-gradient(90deg,#0006ff 0px,#0000ff 40px,#0100ff 46px,#7800ff 212px,#a800ff 275px)"></i>
<i style="top:460px;left:179px;width:271px;background:linear-gradient(90deg,#0006ff 0px,#0000ff 36px,#0100ff 44px,#7700ff 210px,#a500ff 271px)"></i>
<i style="top:462px;left:180px;width:268px;background:linear-gradient(90deg,#0005ff 0px,#0000ff 34px,#0100ff 44px,#7900ff 212px,#a300ff 268px)"></i>
<i style="top:464px;left:181px;width:266px;background:linear-gradient(90deg,#0004ff 0px,#0000ff 30px,#0000ff 42px,#7700ff 210px,#a100ff 266px)"></i>
<i style="top:466px;left:183px;width:262px;background:linear-gradient(90deg,#0004ff 0px,#0000ff 28px,#0100ff 42px,#7800ff 210px,#9f00ff 262px)"></i>
<i style="top:468px;left:184px;width:259px;background:linear-gradient(90deg,#0003ff 0px,#0000ff 26px,#0000ff 40px,#7800ff 210px,#9c00ff 259px)"></i>
<i style="top:470px;left:186px;width:255px;background:linear-gradient(90deg,#0002ff 0px,#0000ff 26px,#0000ff 38px,#7700ff 208px,#9a00ff 255px)"></i>
<i style="top:472px;left:188px;width:251px;background:linear-gradient(90deg,#0002ff 0px,#0000ff 32px,#0100ff 38px,#7900ff 210px,#9700ff 251px)"></i>
<i style="top:474px;left:189px;width:248px;background:linear-gradient(90deg,#0001ff 0px,#0100ff 36px,#7800ff 208px,#9500ff 248px)"></i>
<i style="top:476px;left:191px;width:244px;background:linear-gradient(90deg,#0000ff 0px,#0000ff 34px,#7700ff 206px,#9200ff 244px)"></i>
<i style="top:478px;left:192px;width:242px;background:linear-gradient(90deg,#0000ff 0px,#0100ff 34px,#7800ff 208px,#9100ff 242px)"></i>
<i style="top:480px;left:194px;width:238px;background:linear-gradient(90deg,#0000ff 0px,#0100ff 32px,#7700ff 206px,#8e00ff 238px)"></i>
<i style="top:482px;left:195px;width:235px;background:linear-gradient(90deg,#0000ff 0px,#0100ff 32px,#7900ff 208px,#8c00ff 235px)"></i>
<i style="top:484px;left:197px;width:231px;background:linear-gradient(90deg,#0000ff 0px,#0100ff 30px,#7800ff 206px,#8a00ff 231px)"></i>
<i style="top:486px;left:199px;width:227px;background:linear-gradient(90deg,#0000ff 0px,#0100ff 28px,#7700ff 204px,#8700ff 227px)"></i>
<i style="top:488px;left:200px;width:224px;background:linear-gradient(90deg,#0000ff 0px,#0100ff 28px,#7900ff 206px,#8500ff 224px)"></i>
<i style="top:490px;left:202px;width:220px;background:linear-gradient(90deg,#0000ff 0px,#0100ff 26px,#7800ff 204px,#8300ff 220px)"></i>
<i style="top:492px;left:203px;width:218px;background:linear-gradient(90deg,#0000ff 0px,#0100ff 26px,#7900ff 206px,#8100ff 218px)"></i>
<i style="top:494px;left:205px;width:214px;background:linear-gradient(90deg,#0000ff 0px,#0100ff 24px,#7800ff 204px,#7f00ff 214px)"></i>
<i style="top:496px;left:207px;width:210px;background:linear-gradient(90deg,#0000ff 0px,#0100ff 22px,#7800ff 202px,#7d00ff 210px)"></i>
<i style="top:498px;left:209px;width:206px;background:linear-gradient(90deg,#0000ff 0px,#0100ff 20px,#7800ff 202px,#7b00ff 206px)"></i>
<i style="top:500px;left:211px;width:202px;background:linear-gradient(90deg,#0000ff 0px,#0000ff 18px,#7700ff 200px,#7900ff 202px)"></i>
<i style="top:502px;left:212px;width:199px;background:linear-gradient(90deg,#0000ff 0px,#0100ff 18px,#7700ff 199px)"></i>
<i style="top:504px;left:214px;width:195px;background:linear-gradient(90deg,#0000ff 0px,#0100ff 16px,#7500ff 195px)"></i>
<i style="top:506px;left:216px;width:192px;background:linear-gradient(90deg,#0000ff 0px,#0100ff 14px,#7300ff 192px)"></i>
<i style="top:508px;left:218px;width:188px;background:linear-gradient(90deg,#0000ff 0px,#0000ff 12px,#7100ff 188px)"></i>
<i style="top:510px;left:220px;width:184px;background:linear-gradient(90deg,#0000ff 0px,#0100ff 12px,#6f00ff 184px)"></i>
<i style="top:512px;left:222px;width:180px;background:linear-gradient(90deg,#0000ff 0px,#0100ff 10px,#6d00ff 180px)"></i>
<i style="top:514px;left:224px;width:176px;background:linear-gradient(90deg,#0000ff 0px,#0100ff 8px,#6b00ff 176px)"></i>
<i style="top:516px;left:225px;width:173px;background:linear-gradient(90deg,#0000ff 0px,#0100ff 8px,#6900ff 173px)"></i>
<i style="top:518px;left:228px;width:169px;background:linear-gradient(90deg,#0000ff 0px,#0300ff 8px,#6800ff 169px)"></i>
<i style="top:520px;left:230px;width:165px;background:linear-gradient(90deg,#0000ff 0px,#5e00ff 152px,#6600ff 165px)"></i>
<i style="top:522px;left:232px;width:161px;background:linear-gradient(90deg,#0000ff 0px,#6400ff 161px)"></i>
<i style="top:524px;left:234px;width:157px;background:linear-gradient(90deg,#0100ff 0px,#6200ff 157px)"></i>
<i style="top:526px;left:236px;width:153px;background:linear-gradient(90deg,#0200ff 0px,#6000ff 153px)"></i>
<i style="top:528px;left:238px;width:149px;background:linear-gradient(90deg,#0300ff 0px,#5e00ff 149px)"></i>
<i style="top:530px;left:239px;width:146px;background:linear-gradient(90deg,#0400ff 0px,#5d00ff 146px)"></i>
<i style="top:532px;left:242px;width:142px;background:linear-gradient(90deg,#0500ff 0px,#5b00ff 142px)"></i>
<i style="top:534px;left:245px;width:137px;background:linear-gradient(90deg,#0700ff 0px,#5a00ff 137px)"></i>
<i style="top:536px;left:247px;width:133px;background:linear-gradient(90deg,#0800ff 0px,#5800ff 133px)"></i>
<i style="top:538px;left:249px;width:129px;background:linear-gradient(90deg,#0900ff 0px,#5600ff 129px)"></i>
<i style="top:540px;left:251px;width:125px;background:linear-gradient(90deg,#0a00ff 0px,#5400ff 125px)"></i>
<i style="top:542px;left:253px;width:121px;background:linear-gradient(90deg,#0b00ff 0px,#5200ff 121px)"></i>
<i style="top:544px;left:255px;width:117px;background:linear-gradient(90deg,#0b00ff 0px,#5100ff 117px)"></i>
<i style="top:546px;left:257px;width:114px;background:linear-gradient(90deg,#0c00ff 0px,#5000ff 114px)"></i>
<i style="top:548px;left:260px;width:109px;background:linear-gradient(90deg,#0e00ff 0px,#4e00ff 109px)"></i>
<i style="top:550px;left:262px;width:105px;background:linear-gradient(90deg,#0f00ff 0px,#4c00ff 105px)"></i>
<i style="top:552px;left:265px;width:100px;background:linear-gradient(90deg,#1000ff 0px,#4b00ff 100px)"></i>
<i style="top:554px;left:267px;width:96px;background:linear-gradient(90deg,#1100ff 0px,#4900ff 96px)"></i>
<i style="top:556px;left:270px;width:91px;background:linear-gradient(90deg,#1300ff 0px,#4700ff 91px)"></i>
<i style="top:558px;left:272px;width:87px;background:linear-gradient(90deg,#1400ff 0px,#4600ff 87px)"></i>
<i style="top:560px;left:274px;width:84px;background:linear-gradient(90deg,#1400ff 0px,#4500ff 84px)"></i>
<i style="top:562px;left:276px;width:80px;background:linear-gradient(90deg,#1500ff 0px,#4300ff 80px)"></i>
<i style="top:564px;left:278px;width:76px;background:linear-gradient(90deg,#1600ff 0px,#4100ff 76px)"></i>
<i style="top:566px;left:281px;width:71px;background:linear-gradient(90deg,#1800ff 0px,#4000ff 71px)"></i>
<i style="top:568px;left:283px;width:67px;background:linear-gradient(90deg,#1800ff 0px,#3e00ff 67px)"></i>
<i style="top:570px;left:285px;width:63px;background:linear-gradient(90deg,#1900ff 0px,#3d00ff 63px)"></i>
<i style="top:572px;left:288px;width:59px;background:linear-gradient(90deg,#1b00ff 0px,#3c00ff 59px)"></i>
<i style="top:574px;left:290px;width:55px;background:linear-gradient(90deg,#1c00ff 0px,#3a00ff 55px)"></i>
<i style="top:576px;left:292px;width:51px;background:linear-gradient(90deg,#1c00ff 0px,#3900ff 51px)"></i>
<i style="top:578px;left:294px;width:47px;background:linear-gradient(90deg,#1d00ff 0px,#3700ff 47px)"></i>
<i style="top:580px;left:296px;width:43px;background:linear-gradient(90deg,#1e00ff 0px,#3600ff 43px)"></i>
<i style="top:582px;left:299px;width:38px;background:linear-gradient(90deg,#1f00ff 0px,#3400ff 38px)"></i>
<i style="top:584px;left:301px;width:34px;background:linear-gradient(90deg,#2000ff 0px,#3300ff 34px)"></i>
<i style="top:586px;left:304px;width:30px;background:linear-gradient(90deg,#2100ff 0px,#3200ff 30px)"></i>
<i style="top:588px;left:306px;width:26px;background:linear-gradient(90deg,#2200ff 0px,#3000ff 26px)"></i>
<i style="top:590px;left:308px;width:22px;background:linear-gradient(90deg,#2300ff 0px,#2f00ff 22px)"></i>
<i style="top:592px;left:311px;width:17px;background:linear-gradient(90deg,#2400ff 0px,#2e00ff 17px)"></i>
</b></div>
<svg width="2462" height="1368" viewBox="0 0 2462 1368">
<text x="11.09" y="145.8" font-size="60" fill="#f6f6f6" textLength="160.48" lengthAdjust="spacingAndGlyphs" stroke="#333" stroke-width="1.5">Mode</text>
<text x="185.48" y="145.8" font-size="60" fill="#f6f6f6" textLength="214.67" lengthAdjust="spacingAndGlyphs" stroke="#333" stroke-width="1.5">Settings</text>
<text x="56.72" y="203.5" font-size="24" fill="#f2f2f2" textLength="40.48" lengthAdjust="spacingAndGlyphs">Use</text>
<text x="104.32" y="203.5" font-size="24" fill="#f2f2f2" textLength="34.23" lengthAdjust="spacingAndGlyphs">the</text>
<text x="144.46" y="203.5" font-size="24" fill="#f2f2f2" textLength="41.12" lengthAdjust="spacingAndGlyphs">CCT</text>
<text x="193.28" y="203.5" font-size="24" fill="#f2f2f2" textLength="40.87" lengthAdjust="spacingAndGlyphs">and</text>
<text x="240.11" y="203.5" font-size="24" fill="#f2f2f2" textLength="82.87" lengthAdjust="spacingAndGlyphs">Gamma</text>
<text x="331.23" y="203.5" font-size="24" fill="#f2f2f2" textLength="63.40" lengthAdjust="spacingAndGlyphs">charts</text>
<text x="402.07" y="203.5" font-size="24" fill="#f2f2f2" textLength="23.21" lengthAdjust="spacingAndGlyphs">to</text>
<text x="430.19" y="203.5" font-size="24" fill="#f2f2f2" textLength="64.48" lengthAdjust="spacingAndGlyphs">adjust</text>
<text x="502.62" y="203.5" font-size="24" fill="#f2f2f2" textLength="34.23" lengthAdjust="spacingAndGlyphs">the</text>
<text x="543.06" y="203.5" font-size="24" fill="#f2f2f2" textLength="56.99" lengthAdjust="spacingAndGlyphs">Color</text>
<text x="607.70" y="203.5" font-size="24" fill="#f2f2f2" textLength="133.59" lengthAdjust="spacingAndGlyphs">Temperature</text>
<text x="748.78" y="203.5" font-size="24" fill="#f2f2f2" textLength="40.76" lengthAdjust="spacingAndGlyphs">and</text>
<text x="795.62" y="203.5" font-size="24" fill="#f2f2f2" textLength="82.06" lengthAdjust="spacingAndGlyphs">Gamma</text>
<text x="886.28" y="203.5" font-size="24" fill="#f2f2f2" textLength="82.56" lengthAdjust="spacingAndGlyphs">settings</text>
<text x="975.39" y="203.5" font-size="24" fill="#f2f2f2" textLength="29.72" lengthAdjust="spacingAndGlyphs">on</text>
<text x="57.72" y="237.0" font-size="24" fill="#f2f2f2" textLength="34.02" lengthAdjust="spacingAndGlyphs">the</text>
<text x="98.77" y="237.0" font-size="24" fill="#f2f2f2" textLength="81.70" lengthAdjust="spacingAndGlyphs">display.</text>
<text x="56.72" y="301.0" font-size="24" fill="#f2f2f2" textLength="40.48" lengthAdjust="spacingAndGlyphs">Use</text>
<text x="104.32" y="301.0" font-size="24" fill="#f2f2f2" textLength="34.23" lengthAdjust="spacingAndGlyphs">the</text>
<text x="144.72" y="301.0" font-size="24" fill="#f2f2f2" textLength="92.60" lengthAdjust="spacingAndGlyphs">Measure</text>
<text x="243.72" y="301.0" font-size="24" fill="#f2f2f2" textLength="64.28" lengthAdjust="spacingAndGlyphs">Green</text>
<text x="314.25" y="301.0" font-size="24" fill="#f2f2f2" textLength="73.58" lengthAdjust="spacingAndGlyphs">button</text>
<text x="394.25" y="301.0" font-size="24" fill="#f2f2f2" textLength="23.97" lengthAdjust="spacingAndGlyphs">to</text>
<text x="423.05" y="301.0" font-size="24" fill="#f2f2f2" textLength="59.50" lengthAdjust="spacingAndGlyphs">check</text>
<text x="490.72" y="301.0" font-size="24" fill="#f2f2f2" textLength="33.91" lengthAdjust="spacingAndGlyphs">the</text>
<text x="530.78" y="301.0" font-size="24" fill="#f2f2f2" textLength="118.95" lengthAdjust="spacingAndGlyphs">Colorspace</text>
<text x="656.37" y="301.0" font-size="24" fill="#f2f2f2" textLength="95.52" lengthAdjust="spacingAndGlyphs">selection</text>
<path d="M1677 119H2433V727H1677Z M2244.1,195.2 L1833.4,154.9 L1897.0,566.9Z" fill="#000" fill-opacity="0.37" fill-rule="evenodd"/>
<path d="M1677 119H2433V727H1677Z M1998.2,711.5 L1998.2,711.5 L1998.1,711.5 L1998.0,711.5 L1997.9,711.5 L1997.7,711.5 L1997.6,711.5 L1997.5,711.5 L1997.4,711.5 L1997.2,711.5 L1997.1,711.5 L1996.9,711.5 L1996.8,711.5 L1996.6,711.5 L1996.5,711.5 L1996.3,711.5 L1996.1,711.6 L1995.9,711.5 L1995.7,711.5 L1995.5,711.4 L1995.2,711.3 L1994.9,711.1 L1994.6,711.0 L1994.2,710.8 L1993.8,710.5 L1993.4,710.2 L1992.9,709.9 L1992.4,709.5 L1991.8,709.1 L1991.2,708.7 L1990.6,708.2 L1989.9,707.7 L1989.3,707.2 L1988.6,706.6 L1987.8,706.0 L1987.0,705.4 L1986.2,704.7 L1985.2,703.9 L1984.2,703.1 L1983.2,702.2 L1982.1,701.2 L1981.0,700.3 L1979.8,699.2 L1978.6,698.2 L1977.3,697.0 L1976.0,695.9 L1974.6,694.6 L1973.2,693.4 L1971.7,692.0 L1970.2,690.7 L1968.6,689.3 L1967.0,687.9 L1965.3,686.4 L1963.5,684.9 L1961.6,683.2 L1959.6,681.5 L1957.5,679.7 L1955.3,677.8 L1953.0,675.9 L1950.7,673.8 L1948.3,671.7 L1945.8,669.6 L1943.2,667.4 L1940.6,665.2 L1937.9,662.8 L1935.1,660.3 L1932.2,657.7 L1929.2,654.9 L1926.1,652.0 L1922.8,649.0 L1919.5,645.9 L1916.1,642.5 L1912.5,639.0 L1908.9,635.3 L1905.2,631.6 L1901.4,627.7 L1897.5,623.5 L1893.3,618.8 L1888.9,613.7 L1884.1,608.1 L1879.2,602.1 L1874.0,595.6 L1868.6,588.8 L1863.1,581.6 L1857.5,574.0 L1851.7,565.9 L1845.7,557.4 L1839.5,548.5 L1833.2,539.2 L1826.9,529.6 L1820.4,519.6 L1813.9,509.1 L1807.2,498.2 L1800.4,486.9 L1793.6,475.4 L1786.9,463.7 L1780.2,451.9 L1773.6,440.0 L1766.9,427.8 L1760.3,415.5 L1753.8,403.1 L1747.5,390.8 L1741.5,378.7 L1735.9,366.7 L1730.5,354.7 L1725.3,342.7 L1720.4,331.0 L1715.7,319.5 L1711.3,308.5 L1707.2,297.8 L1703.4,287.4 L1699.8,277.2 L1696.5,267.5 L1693.5,258.1 L1690.8,249.3 L1688.4,240.9 L1686.2,233.0 L1684.4,225.5 L1682.8,218.4 L1681.4,211.6 L1680.2,205.2 L1679.2,199.3 L1678.5,193.7 L1678.0,188.5 L1677.7,183.6 L1677.6,179.0 L1677.6,174.6 L1677.8,170.4 L1678.3,166.6 L1678.9,163.0 L1679.6,159.6 L1680.6,156.5 L1681.7,153.5 L1682.9,150.8 L1684.3,148.3 L1685.9,146.0 L1687.6,143.9 L1689.4,141.9 L1691.3,140.2 L1693.3,138.6 L1695.4,137.3 L1697.7,136.1 L1700.1,135.1 L1702.5,134.2 L1704.9,133.4 L1707.5,132.7 L1710.1,132.1 L1712.8,131.7 L1715.6,131.4 L1718.4,131.1 L1721.2,130.8 L1724.1,130.6 L1727.0,130.5 L1730.0,130.3 L1732.9,130.3 L1735.9,130.2 L1738.9,130.2 L1741.9,130.2 L1744.9,130.2 L1747.9,130.2 L1750.9,130.3 L1753.9,130.4 L1756.9,130.4 L1760.0,130.6 L1763.1,130.7 L1766.2,130.8 L1769.3,131.0 L1772.5,131.2 L1775.7,131.4 L1779.0,131.6 L1782.3,131.8 L1785.6,132.1 L1789.0,132.3 L1792.4,132.6 L1795.9,132.9 L1799.5,133.2 L1803.1,133.5 L1806.7,133.9 L1810.4,134.2 L1814.1,134.6 L1817.9,135.0 L1821.8,135.4 L1825.7,135.8 L1829.7,136.2 L1833.7,136.6 L1837.9,137.1 L1842.1,137.5 L1846.4,138.0 L1850.7,138.5 L1855.1,139.0 L1859.6,139.5 L1864.2,140.0 L1868.9,140.6 L1873.6,141.1 L1878.4,141.7 L1883.3,142.2 L1888.3,142.8 L1893.3,143.4 L1898.5,144.0 L1903.7,144.6 L1909.1,145.3 L1914.5,145.9 L1920.0,146.6 L1925.6,147.2 L1931.3,147.9 L1937.1,148.6 L1942.9,149.3 L1948.9,150.0 L1954.9,150.8 L1961.1,151.5 L1967.3,152.3 L1973.6,153.0 L1980.1,153.8 L1986.6,154.6 L1993.2,155.4 L1999.8,156.2 L2006.6,157.0 L2013.5,157.8 L2020.4,158.7 L2027.5,159.5 L2034.6,160.4 L2041.8,161.3 L2049.0,162.1 L2056.3,163.0 L2063.7,163.9 L2071.2,164.8 L2078.7,165.7 L2086.3,166.6 L2093.9,167.5 L2101.5,168.4 L2109.2,169.4 L2116.9,170.3 L2124.6,171.3 L2132.3,172.2 L2139.9,173.1 L2147.5,174.0 L2155.0,174.9 L2162.4,175.8 L2169.8,176.7 L2177.2,177.6 L2184.6,178.5 L2191.9,179.4 L2199.3,180.3 L2206.6,181.2 L2213.9,182.0 L2221.1,182.9 L2228.0,183.7 L2234.9,184.6 L2241.6,185.4 L2248.3,186.2 L2254.8,186.9 L2261.2,187.7 L2267.4,188.4 L2273.5,189.2 L2279.6,189.9 L2285.4,190.6 L2291.2,191.3 L2296.8,192.0 L2302.2,192.7 L2307.5,193.3 L2312.7,193.9 L2317.7,194.5 L2322.5,195.1 L2327.2,195.7 L2331.8,196.3 L2336.3,196.8 L2340.6,197.3 L2344.8,197.8 L2348.8,198.3 L2352.8,198.8 L2356.6,199.2 L2360.4,199.7 L2364.0,200.1 L2367.5,200.5 L2370.9,201.0 L2374.3,201.4 L2377.6,201.8 L2380.8,202.1 L2383.9,202.5 L2387.0,202.9 L2389.9,203.3 L2392.9,203.6 L2395.7,204.0 L2398.4,204.3 L2401.1,204.6 L2403.7,204.9 L2406.2,205.2 L2408.7,205.5 L2411.0,205.8 L2413.3,206.1 L2415.5,206.3 L2417.6,206.6 L2419.6,206.8 L2421.5,207.1 L2423.4,207.3 L2425.2,207.5 L2426.9,207.7 L2428.5,207.9 L2430.1,208.1 L2431.6,208.3 L2433.0,208.4 L2433.0,246.3Z" fill="#242424" fill-rule="evenodd"/>
<rect x="1676" y="118" width="758" height="610" fill="none" stroke="#9c9c9c" stroke-width="2"/>
<path d="M1676.0 729V737 M1666 728.0H1675" stroke="#e0e0e0" stroke-width="2"/>
<text x="1676.0" y="760.3" font-size="21.5" fill="#d6d6d6" text-anchor="middle">0</text>
<text x="1665.5" y="738.0" font-size="21.5" fill="#d6d6d6" text-anchor="end">0</text>
<path d="M1739.0 729V737 M1666 677.3H1675" stroke="#e0e0e0" stroke-width="2"/>
<text x="1739.0" y="760.3" font-size="21.5" fill="#d6d6d6" text-anchor="middle">0.05</text>
<text x="1665.5" y="685.4" font-size="21.5" fill="#d6d6d6" text-anchor="end">0.05</text>
<path d="M1802.0 729V737 M1666 626.5H1675" stroke="#e0e0e0" stroke-width="2"/>
<text x="1802.0" y="760.3" font-size="21.5" fill="#d6d6d6" text-anchor="middle">0.1</text>
<text x="1665.5" y="634.6" font-size="21.5" fill="#d6d6d6" text-anchor="end">0.1</text>
<path d="M1865.1 729V737 M1666 575.8H1675" stroke="#e0e0e0" stroke-width="2"/>
<text x="1865.1" y="760.3" font-size="21.5" fill="#d6d6d6" text-anchor="middle">0.15</text>
<text x="1665.5" y="583.9" font-size="21.5" fill="#d6d6d6" text-anchor="end">0.15</text>
<path d="M1928.1 729V737 M1666 525.1H1675" stroke="#e0e0e0" stroke-width="2"/>
<text x="1928.1" y="760.3" font-size="21.5" fill="#d6d6d6" text-anchor="middle">0.2</text>
<text x="1665.5" y="533.2" font-size="21.5" fill="#d6d6d6" text-anchor="end">0.2</text>
<path d="M1991.1 729V737 M1666 474.4H1675" stroke="#e0e0e0" stroke-width="2"/>
<text x="1991.1" y="760.3" font-size="21.5" fill="#d6d6d6" text-anchor="middle">0.25</text>
<text x="1665.5" y="482.5" font-size="21.5" fill="#d6d6d6" text-anchor="end">0.25</text>
<path d="M2054.2 729V737 M1666 423.6H1675" stroke="#e0e0e0" stroke-width="2"/>
<text x="2054.2" y="760.3" font-size="21.5" fill="#d6d6d6" text-anchor="middle">0.3</text>
<text x="1665.5" y="431.8" font-size="21.5" fill="#d6d6d6" text-anchor="end">0.3</text>
<path d="M2117.2 729V737 M1666 372.9H1675" stroke="#e0e0e0" stroke-width="2"/>
<text x="2117.2" y="760.3" font-size="21.5" fill="#d6d6d6" text-anchor="middle">0.35</text>
<text x="1665.5" y="381.0" font-size="21.5" fill="#d6d6d6" text-anchor="end">0.35</text>
<path d="M2180.2 729V737 M1666 322.2H1675" stroke="#e0e0e0" stroke-width="2"/>
<text x="2180.2" y="760.3" font-size="21.5" fill="#d6d6d6" text-anchor="middle">0.4</text>
<text x="1665.5" y="330.3" font-size="21.5" fill="#d6d6d6" text-anchor="end">0.4</text>
<path d="M2243.2 729V737 M1666 271.5H1675" stroke="#e0e0e0" stroke-width="2"/>
<text x="2243.2" y="760.3" font-size="21.5" fill="#d6d6d6" text-anchor="middle">0.45</text>
<text x="1665.5" y="279.6" font-size="21.5" fill="#d6d6d6" text-anchor="end">0.45</text>
<path d="M2306.2 729V737 M1666 220.8H1675" stroke="#e0e0e0" stroke-width="2"/>
<text x="2306.2" y="760.3" font-size="21.5" fill="#d6d6d6" text-anchor="middle">0.5</text>
<text x="1665.5" y="228.8" font-size="21.5" fill="#d6d6d6" text-anchor="end">0.5</text>
<path d="M2369.3 729V737 M1666 170.0H1675" stroke="#e0e0e0" stroke-width="2"/>
<text x="2369.3" y="760.3" font-size="21.5" fill="#d6d6d6" text-anchor="middle">0.55</text>
<text x="1665.5" y="178.1" font-size="21.5" fill="#d6d6d6" text-anchor="end">0.55</text>
<rect x="1824.0" y="143.8" width="20.4" height="20.4" fill="none" stroke="#fff" stroke-width="2.2"/>
<rect x="1922.8" y="154.2" width="20.4" height="20.4" fill="none" stroke="#fff" stroke-width="2.2"/>
<rect x="2234.0" y="184.8" width="20.4" height="20.4" fill="none" stroke="#fff" stroke-width="2.2"/>
<rect x="1839.8" y="253.3" width="20.4" height="20.4" fill="none" stroke="#fff" stroke-width="2.2"/>
<rect x="2049.8" y="380.8" width="20.4" height="20.4" fill="none" stroke="#fff" stroke-width="2.2"/>
<rect x="1886.4" y="556.3" width="20.4" height="20.4" fill="none" stroke="#fff" stroke-width="2.2"/>
<rect x="1914.8" y="240.8" width="20.4" height="20.4" fill="none" stroke="#000" stroke-width="2.2"/>
<text x="1966.55" y="110.0" font-size="21.5" fill="#d6d6d6" textLength="30.46" lengthAdjust="spacingAndGlyphs">CIE</text>
<text x="2003.03" y="110.0" font-size="21.5" fill="#d6d6d6" textLength="49.04" lengthAdjust="spacingAndGlyphs">1976</text>
<text x="2057.23" y="110.0" font-size="21.5" fill="#d6d6d6" textLength="35.26" lengthAdjust="spacingAndGlyphs">u&#39;v&#39;</text>
<rect x="122" y="827" width="1216" height="420" fill="#242424"/>
<path d="M112 829H121" stroke="#e0e0e0" stroke-width="2"/>
<text x="111.8" y="837.4" font-size="21.5" fill="#d6d6d6" text-anchor="end">10000</text>
<path d="M122 888.2H1338" stroke="#8c8c8c" stroke-width="2"/>
<path d="M112 888.2H121" stroke="#e0e0e0" stroke-width="2"/>
<text x="111.8" y="896.3" font-size="21.5" fill="#d6d6d6" text-anchor="end">9000</text>
<path d="M122 948.5H1338" stroke="#8c8c8c" stroke-width="2"/>
<path d="M112 948.5H121" stroke="#e0e0e0" stroke-width="2"/>
<text x="111.8" y="956.6" font-size="21.5" fill="#d6d6d6" text-anchor="end">8000</text>
<path d="M122 1008.8H1338" stroke="#8c8c8c" stroke-width="2"/>
<path d="M112 1008.8H121" stroke="#e0e0e0" stroke-width="2"/>
<text x="111.8" y="1016.9" font-size="21.5" fill="#d6d6d6" text-anchor="end">7000</text>
<path d="M122 1068H1338" stroke="#8c8c8c" stroke-width="2"/>
<path d="M112 1068H121" stroke="#e0e0e0" stroke-width="2"/>
<text x="111.8" y="1076.1" font-size="21.5" fill="#d6d6d6" text-anchor="end">6000</text>
<path d="M122 1128.5H1338" stroke="#8c8c8c" stroke-width="2"/>
<path d="M112 1128.5H121" stroke="#e0e0e0" stroke-width="2"/>
<text x="111.8" y="1136.6" font-size="21.5" fill="#d6d6d6" text-anchor="end">5000</text>
<path d="M122 1188.5H1338" stroke="#8c8c8c" stroke-width="2"/>
<path d="M112 1188.5H121" stroke="#e0e0e0" stroke-width="2"/>
<text x="111.8" y="1196.6" font-size="21.5" fill="#d6d6d6" text-anchor="end">4000</text>
<path d="M112 1247H121" stroke="#e0e0e0" stroke-width="2"/>
<text x="111.8" y="1258.0" font-size="21.5" fill="#d6d6d6" text-anchor="end">3000</text>
<path d="M122 829H1338" stroke="#8c8c8c" stroke-width="2"/>
<rect x="122" y="827" width="1216" height="420" fill="none" stroke="#9c9c9c" stroke-width="2"/>
<defs><linearGradient id="sh" x1="0" y1="0" x2="0" y2="1"><stop offset="0" stop-color="#fff" stop-opacity=".37"/><stop offset=".2" stop-color="#fff" stop-opacity=".165"/><stop offset=".41" stop-color="#fff" stop-opacity="0"/></linearGradient><linearGradient id="sb" x1="0" y1="0" x2="0" y2="1"><stop offset=".84" stop-color="#000" stop-opacity="0"/><stop offset="1" stop-color="#000" stop-opacity=".05"/></linearGradient></defs>
<rect x="146.3" y="1099.2" width="191.6" height="146.8" fill="#0b0b0b"/>
<rect x="146.3" y="1099.2" width="191.6" height="146.8" fill="url(#sh)"/>
<rect x="146.3" y="1099.2" width="191.6" height="146.8" fill="url(#sb)"/>
<path d="M146.3 1246V1099.2H337.9V1246" fill="none" stroke="#000" stroke-width="2"/>
<text x="244.2" y="1271.3" font-size="21.5" fill="#d6d6d6" text-anchor="middle">0</text>
<rect x="389.5" y="1011.7" width="191.6" height="234.3" fill="#494949"/>
<rect x="389.5" y="1011.7" width="191.6" height="234.3" fill="url(#sh)"/>
<rect x="389.5" y="1011.7" width="191.6" height="234.3" fill="url(#sb)"/>
<path d="M389.5 1246V1011.7H581.1V1246" fill="none" stroke="#000" stroke-width="2"/>
<text x="487.4" y="1271.3" font-size="21.5" fill="#d6d6d6" text-anchor="middle">25</text>
<rect x="632.7" y="1009.2" width="191.6" height="236.8" fill="#828282"/>
<rect x="632.7" y="1009.2" width="191.6" height="236.8" fill="url(#sh)"/>
<rect x="632.7" y="1009.2" width="191.6" height="236.8" fill="url(#sb)"/>
<path d="M632.7 1246V1009.2H824.3V1246" fill="none" stroke="#000" stroke-width="2"/>
<text x="730.6" y="1271.3" font-size="21.5" fill="#d6d6d6" text-anchor="middle">50</text>
<rect x="875.9" y="1023.3" width="191.6" height="222.7" fill="#b7b7b7"/>
<rect x="875.9" y="1023.3" width="191.6" height="222.7" fill="url(#sh)"/>
<rect x="875.9" y="1023.3" width="191.6" height="222.7" fill="url(#sb)"/>
<path d="M875.9 1246V1023.3H1067.5V1246" fill="none" stroke="#000" stroke-width="2"/>
<text x="973.8" y="1271.3" font-size="21.5" fill="#d6d6d6" text-anchor="middle">75</text>
<rect x="1119.1" y="1028.0" width="191.6" height="218.0" fill="#f2f2f2"/>
<rect x="1119.1" y="1028.0" width="191.6" height="218.0" fill="url(#sh)"/>
<rect x="1119.1" y="1028.0" width="191.6" height="218.0" fill="url(#sb)"/>
<path d="M1119.1 1246V1028.0H1310.7V1246" fill="none" stroke="#000" stroke-width="2"/>
<text x="1217.0" y="1271.3" font-size="21.5" fill="#d6d6d6" text-anchor="middle">100</text>
<path d="M122.0 1248V1256" stroke="#e0e0e0" stroke-width="2"/>
<path d="M365.2 1248V1256" stroke="#e0e0e0" stroke-width="2"/>
<path d="M608.4 1248V1256" stroke="#e0e0e0" stroke-width="2"/>
<path d="M851.6 1248V1256" stroke="#e0e0e0" stroke-width="2"/>
<path d="M1094.8 1248V1256" stroke="#e0e0e0" stroke-width="2"/>
<path d="M1338.0 1248V1256" stroke="#e0e0e0" stroke-width="2"/>
<path d="M122 1247H1338" stroke="#9c9c9c" stroke-width="2"/>
<path d="M123 1037H1342" stroke="#dfa43e" stroke-width="2.4"/>
<text x="547.55" y="819.6" font-size="21.5" fill="#d6d6d6" textLength="105.40" lengthAdjust="spacingAndGlyphs">Correlated</text>
<text x="657.48" y="819.6" font-size="21.5" fill="#d6d6d6" textLength="52.38" lengthAdjust="spacingAndGlyphs">Color</text>
<text x="715.97" y="819.6" font-size="21.5" fill="#d6d6d6" textLength="126.92" lengthAdjust="spacingAndGlyphs">Temperature</text>
<text x="1237.20" y="814.0" font-size="22.5" fill="#fafafa" textLength="44.48" lengthAdjust="spacingAndGlyphs">CCT:</text>
<text x="1286.98" y="814.0" font-size="22.5" fill="#fafafa" textLength="49.98" lengthAdjust="spacingAndGlyphs">6673</text>
<rect x="1425" y="827" width="1015" height="412" fill="#242424"/>
<path d="M1425 880.0H2440" stroke="#8c8c8c" stroke-width="2"/>
<path d="M1416 880.0H1424" stroke="#e0e0e0" stroke-width="2"/>
<text x="1415.3" y="888.2" font-size="21.5" fill="#d6d6d6" text-anchor="end">3</text>
<path d="M1425 931.3H2440" stroke="#8c8c8c" stroke-width="2"/>
<path d="M1416 931.3H1424" stroke="#e0e0e0" stroke-width="2"/>
<text x="1415.3" y="939.5" font-size="21.5" fill="#d6d6d6" text-anchor="end">2.8</text>
<path d="M1425 982.7H2440" stroke="#8c8c8c" stroke-width="2"/>
<path d="M1416 982.7H1424" stroke="#e0e0e0" stroke-width="2"/>
<text x="1415.3" y="990.9" font-size="21.5" fill="#d6d6d6" text-anchor="end">2.6</text>
<path d="M1425 1034.0H2440" stroke="#8c8c8c" stroke-width="2"/>
<path d="M1416 1034.0H1424" stroke="#e0e0e0" stroke-width="2"/>
<text x="1415.3" y="1042.2" font-size="21.5" fill="#d6d6d6" text-anchor="end">2.4</text>
<path d="M1425 1085.3H2440" stroke="#8c8c8c" stroke-width="2"/>
<path d="M1416 1085.3H1424" stroke="#e0e0e0" stroke-width="2"/>
<text x="1415.3" y="1093.5" font-size="21.5" fill="#d6d6d6" text-anchor="end">2.2</text>
<path d="M1425 1136.6H2440" stroke="#8c8c8c" stroke-width="2"/>
<path d="M1416 1136.6H1424" stroke="#e0e0e0" stroke-width="2"/>
<text x="1415.3" y="1144.8" font-size="21.5" fill="#d6d6d6" text-anchor="end">2</text>
<path d="M1425 1188.0H2440" stroke="#8c8c8c" stroke-width="2"/>
<path d="M1416 1188.0H1424" stroke="#e0e0e0" stroke-width="2"/>
<text x="1415.3" y="1196.2" font-size="21.5" fill="#d6d6d6" text-anchor="end">1.8</text>
<path d="M1425 1240.0H2440" stroke="#8c8c8c" stroke-width="2"/>
<path d="M1416 1239.3H1424" stroke="#e0e0e0" stroke-width="2"/>
<text x="1415.3" y="1247.5" font-size="21.5" fill="#d6d6d6" text-anchor="end">1.6</text>
<path d="M1425.0 1034.0 L1678.2 1038.3 L1931.5 1021.9 L2184.8 1018.1 L2438.0 1031.4" fill="none" stroke="#8a8a8a" stroke-width="4" stroke-linejoin="round"/>
<path d="M1425.0 1034.0 L1437.2 1031.2 L2438.0 1031.2" fill="none" stroke="#f6f622" stroke-width="5.2" stroke-linejoin="round" stroke-linecap="round"/>
<rect x="1425" y="827" width="1015" height="412" fill="none" stroke="#9c9c9c" stroke-width="2"/>
<path d="M1425.0 1240V1248" stroke="#e0e0e0" stroke-width="2"/>
<text x="1425.0" y="1271.3" font-size="21.5" fill="#d6d6d6" text-anchor="middle">0</text>
<path d="M1526.3 1240V1248" stroke="#e0e0e0" stroke-width="2"/>
<text x="1526.3" y="1271.3" font-size="21.5" fill="#d6d6d6" text-anchor="middle">10</text>
<path d="M1627.6 1240V1248" stroke="#e0e0e0" stroke-width="2"/>
<text x="1627.6" y="1271.3" font-size="21.5" fill="#d6d6d6" text-anchor="middle">20</text>
<path d="M1728.9 1240V1248" stroke="#e0e0e0" stroke-width="2"/>
<text x="1728.9" y="1271.3" font-size="21.5" fill="#d6d6d6" text-anchor="middle">30</text>
<path d="M1830.2 1240V1248" stroke="#e0e0e0" stroke-width="2"/>
<text x="1830.2" y="1271.3" font-size="21.5" fill="#d6d6d6" text-anchor="middle">40</text>
<path d="M1931.5 1240V1248" stroke="#e0e0e0" stroke-width="2"/>
<text x="1931.5" y="1271.3" font-size="21.5" fill="#d6d6d6" text-anchor="middle">50</text>
<path d="M2032.8 1240V1248" stroke="#e0e0e0" stroke-width="2"/>
<text x="2032.8" y="1271.3" font-size="21.5" fill="#d6d6d6" text-anchor="middle">60</text>
<path d="M2134.1 1240V1248" stroke="#e0e0e0" stroke-width="2"/>
<text x="2134.1" y="1271.3" font-size="21.5" fill="#d6d6d6" text-anchor="middle">70</text>
<path d="M2235.4 1240V1248" stroke="#e0e0e0" stroke-width="2"/>
<text x="2235.4" y="1271.3" font-size="21.5" fill="#d6d6d6" text-anchor="middle">80</text>
<path d="M2336.7 1240V1248" stroke="#e0e0e0" stroke-width="2"/>
<text x="2336.7" y="1271.3" font-size="21.5" fill="#d6d6d6" text-anchor="middle">90</text>
<path d="M2438.0 1240V1248" stroke="#e0e0e0" stroke-width="2"/>
<text x="2439.2" y="1271.3" font-size="21.5" fill="#d6d6d6" text-anchor="middle">100</text>
<text x="1831.70" y="819.6" font-size="21.5" fill="#d6d6d6" textLength="76.25" lengthAdjust="spacingAndGlyphs">Gamma</text>
<text x="1914.28" y="819.6" font-size="21.5" fill="#d6d6d6" textLength="80.71" lengthAdjust="spacingAndGlyphs">Log/Log</text>
<text x="2248.78" y="813.7" font-size="22.5" fill="#fafafa" textLength="49.20" lengthAdjust="spacingAndGlyphs">Total</text>
<text x="2302.86" y="813.7" font-size="22.5" fill="#fafafa" textLength="87.49" lengthAdjust="spacingAndGlyphs">Gamma:</text>
<text x="2394.66" y="813.7" font-size="22.5" fill="#fafafa" textLength="44.32" lengthAdjust="spacingAndGlyphs">2.42</text>
</svg>
</body></html>
